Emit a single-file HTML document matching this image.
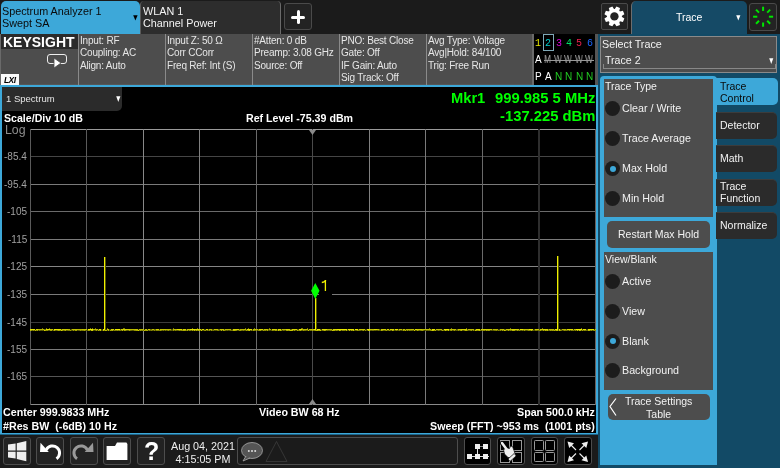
<!DOCTYPE html>
<html><head><meta charset="utf-8">
<style>
*{margin:0;padding:0;box-sizing:border-box}
html,body{width:780px;height:468px;overflow:hidden;background:#1b1b1b;font-family:"Liberation Sans",sans-serif}
.a{position:absolute}
.t{position:absolute;white-space:pre;line-height:1;will-change:transform}
.ib{position:absolute;will-change:transform;font-size:10px;letter-spacing:-0.2px;color:#e6e6e6;line-height:12.3px;white-space:pre}
.rb{position:absolute;width:15px;height:15px;border-radius:50%;background:#1c1c1c}
.rl{position:absolute;will-change:transform;font-size:10.7px;color:#f2f2f2;white-space:pre;line-height:1}
.sk{position:absolute;left:716px;width:61px;height:27px;background:#2b2b2b;border-radius:0 5px 5px 0;border-top:1px solid #3c3c3c}
.skt{position:absolute;will-change:transform;left:720px;font-size:10.5px;color:#f2f2f2;white-space:pre;line-height:11.5px}
.tb{position:absolute;top:437px;width:28px;height:28px;background:#222;border:1px solid #4d4d4d;border-radius:3px}
</style></head><body>


<div class="a" style="left:0;top:0;width:780px;height:34px;background:#1b1b1b"></div>
<div class="a" style="left:1px;top:1px;width:139px;height:33px;background:#3da8d9;border-radius:5px 5px 0 0"></div>
<div class="t" style="left:1.6px;top:5px;font-size:10.8px;color:#0a0a0a;line-height:12px">Spectrum Analyzer 1<br>Swept SA</div>
<svg class="a" style="left:133.3px;top:15px" width="5.8" height="6.6"><polygon points="0.2,0.2 4.6,0.2 2.4,5.6" fill="#000"/></svg>
<div class="a" style="left:140px;top:1px;width:141px;height:33px;background:#2d2d2d;border-right:1px solid #6a6a6a;border-left:1px solid #5a5a5a;border-radius:4px 4px 0 0"></div>
<div class="t" style="left:142.5px;top:5px;font-size:10.8px;color:#f4f4f4;line-height:12px">WLAN 1<br>Channel Power</div>
<div class="a" style="left:284px;top:3px;width:28px;height:27px;background:#232323;border:1px solid #4a4a4a;border-radius:3px"></div>
<div class="a" style="left:291px;top:15.5px;width:14px;height:3px;background:#fff;border-radius:1.5px"></div>
<div class="a" style="left:296.5px;top:10px;width:3px;height:14px;background:#fff;border-radius:1.5px"></div>

<div class="a" style="left:601px;top:3px;width:27px;height:27px;background:#232323;border:1px solid #4a4a4a;border-radius:2px"></div>
<svg class="a" style="left:601px;top:3px" width="27" height="27" viewBox="0 0 27 27">
 <g transform="translate(13.4,13.4)" fill="#fff">
 <polygon points="-2.6,-6 2.6,-6 1.9,-10 -1.9,-10" transform="rotate(22.5)"/><polygon points="-2.6,-6 2.6,-6 1.9,-10 -1.9,-10" transform="rotate(67.5)"/><polygon points="-2.6,-6 2.6,-6 1.9,-10 -1.9,-10" transform="rotate(112.5)"/><polygon points="-2.6,-6 2.6,-6 1.9,-10 -1.9,-10" transform="rotate(157.5)"/><polygon points="-2.6,-6 2.6,-6 1.9,-10 -1.9,-10" transform="rotate(202.5)"/><polygon points="-2.6,-6 2.6,-6 1.9,-10 -1.9,-10" transform="rotate(247.5)"/><polygon points="-2.6,-6 2.6,-6 1.9,-10 -1.9,-10" transform="rotate(292.5)"/><polygon points="-2.6,-6 2.6,-6 1.9,-10 -1.9,-10" transform="rotate(337.5)"/>
 <circle r="7.4"/>
 <circle r="4.2" fill="#232323"/>
 </g>
</svg>
<div class="a" style="left:631px;top:1px;width:116px;height:34px;background:#154a66;border-radius:5px 5px 0 0;border-left:1px solid #6d6d6d"></div>
<div class="t" style="left:675.5px;top:11.5px;font-size:10.5px;color:#fff">Trace</div>
<svg class="a" style="left:736px;top:15px" width="5.6" height="6.4"><polygon points="0.2,0.2 4.3999999999999995,0.2 2.3,5.4" fill="#fff"/></svg>
<div class="a" style="left:749px;top:3px;width:28px;height:28px;background:#232323;border:1px solid #4a4a4a;border-radius:3px"></div>
<svg class="a" style="left:749px;top:3px" width="28" height="28" viewBox="0 0 28 28">
 <g transform="translate(14.1,13.7)" stroke="#00e600" stroke-width="2">
 <line x1="0" y1="-5.8" x2="0" y2="-10" transform="rotate(0)"/><line x1="0" y1="-5.8" x2="0" y2="-10" transform="rotate(45)"/><line x1="0" y1="-5.8" x2="0" y2="-10" transform="rotate(90)"/><line x1="0" y1="-5.8" x2="0" y2="-10" transform="rotate(135)"/><line x1="0" y1="-5.8" x2="0" y2="-10" transform="rotate(180)"/><line x1="0" y1="-5.8" x2="0" y2="-10" transform="rotate(225)"/><line x1="0" y1="-5.8" x2="0" y2="-10" transform="rotate(270)"/><line x1="0" y1="-5.8" x2="0" y2="-10" transform="rotate(315)"/>
 </g>
</svg>


<div class="a" style="left:0;top:34px;width:598px;height:51px;background:#4d4d4d"></div><div class="a" style="left:0;top:84px;width:598px;height:1px;background:#575757"></div>
<div class="a" style="left:0;top:34px;width:1px;height:51px;background:#6a6a6a"></div>
<div class="a" style="left:1px;top:34px;width:77px;height:14.5px;background:#2b2b2b"></div>
<div class="t" style="left:3px;top:35px;font-size:14px;font-weight:bold;color:#fff">KEYSIGHT</div>
<div class="a" style="left:47px;top:54px;width:20px;height:10px;border:1.3px solid #eee;border-radius:3px"></div>
<svg class="a" style="left:52px;top:58px" width="10" height="11"><polygon points="2,0 9,5 2,10" fill="#fff" stroke="#4d4d4d" stroke-width="0.8"/></svg>
<div class="a" style="left:1px;top:74px;width:18px;height:10.5px;background:#fafafa"></div>
<div class="t" style="left:3.5px;top:75.5px;font-size:8.5px;font-weight:bold;font-style:italic;color:#000;letter-spacing:-0.6px">LXI</div>

<div class="a" style="left:78px;top:34px;width:1px;height:51px;background:#8a8a8a"></div>
<div class="a" style="left:165px;top:34px;width:1px;height:51px;background:#8a8a8a"></div>
<div class="a" style="left:252px;top:34px;width:1px;height:51px;background:#8a8a8a"></div>
<div class="a" style="left:339px;top:34px;width:1px;height:51px;background:#8a8a8a"></div>
<div class="a" style="left:426px;top:34px;width:1px;height:51px;background:#8a8a8a"></div>
<div class="ib" style="left:79.5px;top:35px">Input: RF<br>Coupling: AC<br>Align: Auto</div>
<div class="ib" style="left:166.5px;top:35px">Input Z: 50 Ω<br>Corr CCorr<br>Freq Ref: Int (S)</div>
<div class="ib" style="left:253.5px;top:35px">#Atten: 0 dB<br>Preamp: 3.08 GHz<br>Source: Off</div>
<div class="ib" style="left:340.5px;top:35px">PNO: Best Close<br>Gate: Off<br>IF Gain: Auto<br>Sig Track: Off</div>
<div class="ib" style="left:427.5px;top:35px">Avg Type: Voltage<br>Avg|Hold: 84/100<br>Trig: Free Run</div>

<div class="a" style="left:532px;top:34px;width:2px;height:51px;background:#6a6a6a"></div>
<div class="a" style="left:534px;top:34px;width:61px;height:51px;background:#000"></div>
<div class="a" style="left:543px;top:34px;width:10.5px;height:17px;border:1px solid #7fa9b8"></div>

<div class="t" style="left:535px;top:39px;font-size:10px;font-family:'Liberation Mono',monospace;color:#e6e600">1</div>
<div class="t" style="left:545.3px;top:39px;font-size:10px;font-family:'Liberation Mono',monospace;color:#00cccc">2</div>
<div class="t" style="left:555.6px;top:39px;font-size:10px;font-family:'Liberation Mono',monospace;color:#dd00dd">3</div>
<div class="t" style="left:565.9px;top:39px;font-size:10px;font-family:'Liberation Mono',monospace;color:#00dd66">4</div>
<div class="t" style="left:576.2px;top:39px;font-size:10px;font-family:'Liberation Mono',monospace;color:#e8204c">5</div>
<div class="t" style="left:586.5px;top:39px;font-size:10px;font-family:'Liberation Mono',monospace;color:#1a66ff">6</div>
<div class="t" style="left:534.5px;top:55px;font-size:10px;color:#fff;transform:scaleX(1);transform-origin:left">A</div>
<div class="t" style="left:543.8px;top:55px;font-size:10px;color:#aaa;transform:scaleX(0.82);transform-origin:left">M</div>
<div class="t" style="left:554.1px;top:55px;font-size:10px;color:#aaa;transform:scaleX(0.82);transform-origin:left">W</div>
<div class="t" style="left:564.4px;top:55px;font-size:10px;color:#aaa;transform:scaleX(0.82);transform-origin:left">W</div>
<div class="t" style="left:574.7px;top:55px;font-size:10px;color:#aaa;transform:scaleX(0.82);transform-origin:left">W</div>
<div class="t" style="left:585.0px;top:55px;font-size:10px;color:#aaa;transform:scaleX(0.82);transform-origin:left">W</div>
<div class="a" style="left:544px;top:59.5px;width:50px;height:1px;background:#999"></div>
<div class="t" style="left:534.5px;top:71.5px;font-size:10px;color:#fff">P</div>
<div class="t" style="left:544.8px;top:71.5px;font-size:10px;color:#fff">A</div>
<div class="t" style="left:555.1px;top:71.5px;font-size:10px;color:#22cc22">N</div>
<div class="t" style="left:565.4px;top:71.5px;font-size:10px;color:#22cc22">N</div>
<div class="t" style="left:575.7px;top:71.5px;font-size:10px;color:#22cc22">N</div>
<div class="t" style="left:586.0px;top:71.5px;font-size:10px;color:#22cc22">N</div>

<div class="a" style="left:0;top:85px;width:598px;height:349px;background:#3da8d9"></div><div class="a" style="left:0;top:434px;width:598px;height:1px;background:#1d6488"></div>
<div class="a" style="left:2px;top:87px;width:594px;height:346px;background:#000"></div>
<div class="a" style="left:2px;top:87px;width:120px;height:23.5px;background:#2b2b2b;border-radius:0 0 5px 0"></div>
<div class="t" style="left:5.5px;top:94px;font-size:9.5px;color:#e6e6e6">1 Spectrum</div>
<svg class="a" style="left:115.7px;top:96px" width="5.6" height="7"><polygon points="0.2,0.2 4.3999999999999995,0.2 2.3,6" fill="#fff"/></svg>
<div class="t" style="left:4px;top:113px;font-size:10.6px;font-weight:bold;color:#fff">Scale/Div 10 dB</div>
<div class="t" style="left:245.5px;top:113px;font-size:10.65px;font-weight:bold;color:#fff">Ref Level -75.39 dBm</div>
<div class="t" style="left:5px;top:124px;font-size:12.3px;color:#8e8e8e">Log</div>
<div class="t" style="left:450.5px;top:91px;font-size:14.7px;font-weight:bold;color:#00ff00">Mkr1</div>
<div class="t" style="right:185px;top:91px;font-size:14.8px;font-weight:bold;color:#00ff00">999.985 5 MHz</div>
<div class="t" style="right:185px;top:109px;font-size:14.8px;font-weight:bold;color:#00ff00">-137.225 dBm</div>

<svg class="a" style="left:0;top:0" width="600" height="440" viewBox="0 0 600 440" shape-rendering="crispEdges"><rect x="30" y="129" width="566" height="1" fill="#9a9a9a"/><rect x="30" y="156" width="566" height="1" fill="#454545"/><rect x="30" y="184" width="566" height="1" fill="#7a7a7a"/><rect x="30" y="211" width="566" height="1" fill="#6a6a6a"/><rect x="30" y="239" width="566" height="1" fill="#7a7a7a"/><rect x="30" y="266" width="566" height="1" fill="#858585"/><rect x="30" y="294" width="566" height="1" fill="#7a7a7a"/><rect x="30" y="322" width="566" height="1" fill="#3c3c3c"/><rect x="30" y="349" width="566" height="1" fill="#7a7a7a"/><rect x="30" y="376" width="566" height="1" fill="#555555"/><rect x="30" y="404" width="566" height="1" fill="#8a8a8a"/><rect x="30" y="129" width="1" height="276" fill="#5a5a5a"/><rect x="86" y="129" width="1" height="276" fill="#5a5a5a"/><rect x="143" y="129" width="1" height="276" fill="#888"/><rect x="199" y="129" width="1" height="276" fill="#808080"/><rect x="256" y="129" width="1" height="276" fill="#6a6a6a"/><rect x="312" y="129" width="1" height="276" fill="#4a4a4a"/><rect x="369" y="129" width="1" height="276" fill="#808080"/><rect x="425" y="129" width="1" height="276" fill="#7a7a7a"/><rect x="482" y="129" width="1" height="276" fill="#6a6a6a"/><rect x="538" y="129" width="1" height="276" fill="#2e2e2e"/><rect x="539" y="129" width="1" height="276" fill="#2e2e2e"/><rect x="595" y="129" width="1" height="276" fill="#6a5e5a"/></svg>
<div class="t" style="right:753px;top:152px;font-size:10px;color:#a0a0a0">-85.4</div>
<div class="t" style="right:753px;top:180px;font-size:10px;color:#a0a0a0">-95.4</div>
<div class="t" style="right:753px;top:207px;font-size:10px;color:#a0a0a0">-105</div>
<div class="t" style="right:753px;top:235px;font-size:10px;color:#a0a0a0">-115</div>
<div class="t" style="right:753px;top:262px;font-size:10px;color:#a0a0a0">-125</div>
<div class="t" style="right:753px;top:290px;font-size:10px;color:#a0a0a0">-135</div>
<div class="t" style="right:753px;top:318px;font-size:10px;color:#a0a0a0">-145</div>
<div class="t" style="right:753px;top:345px;font-size:10px;color:#a0a0a0">-155</div>
<div class="t" style="right:753px;top:372px;font-size:10px;color:#a0a0a0">-165</div>
<svg class="a" style="left:309px;top:130px" width="8" height="6"><polygon points="0,0 7,0 3.5,5" fill="#8a8a8a"/></svg>
<svg class="a" style="left:309px;top:399px" width="8" height="6"><polygon points="3.5,0 7,5 0,5" fill="#8a8a8a"/></svg>
<svg class="a" style="left:0;top:0" width="600" height="440" shape-rendering="crispEdges"><rect x="30" y="329" width="1" height="1" fill="#e7e700"/><rect x="30" y="330" width="1" height="1" fill="#bebe00"/><rect x="31" y="329" width="1" height="1" fill="#e7e700"/><rect x="31" y="330" width="1" height="1" fill="#8a8a00"/><rect x="32" y="329" width="1" height="1" fill="#e7e700"/><rect x="32" y="330" width="1" height="1" fill="#696900"/><rect x="33" y="329" width="1" height="1" fill="#e7e700"/><rect x="33" y="330" width="1" height="1" fill="#8d8d00"/><rect x="34" y="329" width="1" height="1" fill="#e7e700"/><rect x="34" y="330" width="1" height="1" fill="#686800"/><rect x="35" y="329" width="1" height="1" fill="#363600"/><rect x="35" y="330" width="1" height="1" fill="#bcbc00"/><rect x="36" y="329" width="1" height="1" fill="#d7d700"/><rect x="36" y="330" width="1" height="1" fill="#7a7a00"/><rect x="37" y="329" width="1" height="1" fill="#d7d700"/><rect x="37" y="330" width="1" height="1" fill="#a3a300"/><rect x="38" y="329" width="1" height="1" fill="#b7b700"/><rect x="38" y="330" width="1" height="1" fill="#434300"/><rect x="39" y="329" width="1" height="1" fill="#b7b700"/><rect x="39" y="330" width="1" height="1" fill="#7c7c00"/><rect x="40" y="329" width="1" height="1" fill="#b7b700"/><rect x="40" y="330" width="1" height="1" fill="#616100"/><rect x="41" y="329" width="1" height="1" fill="#b7b700"/><rect x="41" y="330" width="1" height="1" fill="#545400"/><rect x="42" y="329" width="1" height="1" fill="#b7b700"/><rect x="42" y="330" width="1" height="1" fill="#5e5e00"/><rect x="42" y="328" width="1" height="1" fill="#787800"/><rect x="43" y="329" width="1" height="1" fill="#b7b700"/><rect x="43" y="330" width="1" height="1" fill="#484800"/><rect x="44" y="329" width="1" height="1" fill="#777700"/><rect x="44" y="330" width="1" height="1" fill="#d7d700"/><rect x="45" y="329" width="1" height="1" fill="#6c6c00"/><rect x="45" y="330" width="1" height="1" fill="#adad00"/><rect x="46" y="329" width="1" height="1" fill="#e1e100"/><rect x="46" y="330" width="1" height="1" fill="#8e8e00"/><rect x="46" y="328" width="1" height="1" fill="#787800"/><rect x="47" y="329" width="1" height="1" fill="#e1e100"/><rect x="47" y="330" width="1" height="1" fill="#949400"/><rect x="48" y="329" width="1" height="1" fill="#e1e100"/><rect x="48" y="330" width="1" height="1" fill="#5c5c00"/><rect x="49" y="329" width="1" height="1" fill="#e1e100"/><rect x="49" y="330" width="1" height="1" fill="#575700"/><rect x="49" y="328" width="1" height="1" fill="#787800"/><rect x="50" y="329" width="1" height="1" fill="#c0c000"/><rect x="50" y="330" width="1" height="1" fill="#a3a300"/><rect x="51" y="329" width="1" height="1" fill="#c0c000"/><rect x="51" y="330" width="1" height="1" fill="#abab00"/><rect x="52" y="329" width="1" height="1" fill="#c0c000"/><rect x="52" y="330" width="1" height="1" fill="#4b4b00"/><rect x="53" y="329" width="1" height="1" fill="#484800"/><rect x="53" y="330" width="1" height="1" fill="#747400"/><rect x="54" y="329" width="1" height="1" fill="#eded00"/><rect x="54" y="330" width="1" height="1" fill="#b6b600"/><rect x="55" y="329" width="1" height="1" fill="#eded00"/><rect x="55" y="330" width="1" height="1" fill="#737300"/><rect x="56" y="329" width="1" height="1" fill="#e3e300"/><rect x="56" y="330" width="1" height="1" fill="#666600"/><rect x="57" y="329" width="1" height="1" fill="#e3e300"/><rect x="57" y="330" width="1" height="1" fill="#878700"/><rect x="58" y="329" width="1" height="1" fill="#e3e300"/><rect x="58" y="330" width="1" height="1" fill="#abab00"/><rect x="59" y="329" width="1" height="1" fill="#e3e300"/><rect x="59" y="330" width="1" height="1" fill="#a0a000"/><rect x="60" y="329" width="1" height="1" fill="#e3e300"/><rect x="60" y="330" width="1" height="1" fill="#848400"/><rect x="61" y="329" width="1" height="1" fill="#6e6e00"/><rect x="61" y="330" width="1" height="1" fill="#d4d400"/><rect x="62" y="329" width="1" height="1" fill="#c6c600"/><rect x="62" y="330" width="1" height="1" fill="#a5a500"/><rect x="63" y="329" width="1" height="1" fill="#c6c600"/><rect x="63" y="330" width="1" height="1" fill="#707000"/><rect x="64" y="329" width="1" height="1" fill="#c6c600"/><rect x="64" y="330" width="1" height="1" fill="#8b8b00"/><rect x="65" y="329" width="1" height="1" fill="#c6c600"/><rect x="65" y="330" width="1" height="1" fill="#b1b100"/><rect x="66" y="329" width="1" height="1" fill="#c6c600"/><rect x="66" y="330" width="1" height="1" fill="#616100"/><rect x="67" y="329" width="1" height="1" fill="#c6c600"/><rect x="67" y="330" width="1" height="1" fill="#696900"/><rect x="68" y="329" width="1" height="1" fill="#b9b900"/><rect x="68" y="330" width="1" height="1" fill="#7c7c00"/><rect x="69" y="329" width="1" height="1" fill="#b9b900"/><rect x="69" y="330" width="1" height="1" fill="#7e7e00"/><rect x="70" y="329" width="1" height="1" fill="#393900"/><rect x="70" y="330" width="1" height="1" fill="#9c9c00"/><rect x="71" y="329" width="1" height="1" fill="#6b6b00"/><rect x="71" y="330" width="1" height="1" fill="#5b5b00"/><rect x="72" y="329" width="1" height="1" fill="#bebe00"/><rect x="72" y="330" width="1" height="1" fill="#535300"/><rect x="73" y="329" width="1" height="1" fill="#bebe00"/><rect x="73" y="330" width="1" height="1" fill="#989800"/><rect x="74" y="329" width="1" height="1" fill="#bebe00"/><rect x="74" y="330" width="1" height="1" fill="#565600"/><rect x="75" y="329" width="1" height="1" fill="#bebe00"/><rect x="75" y="330" width="1" height="1" fill="#a5a500"/><rect x="76" y="329" width="1" height="1" fill="#bebe00"/><rect x="76" y="330" width="1" height="1" fill="#a6a600"/><rect x="77" y="329" width="1" height="1" fill="#b6b600"/><rect x="77" y="330" width="1" height="1" fill="#4a4a00"/><rect x="78" y="329" width="1" height="1" fill="#b6b600"/><rect x="78" y="330" width="1" height="1" fill="#595900"/><rect x="79" y="329" width="1" height="1" fill="#b6b600"/><rect x="79" y="330" width="1" height="1" fill="#676700"/><rect x="80" y="329" width="1" height="1" fill="#b6b600"/><rect x="80" y="330" width="1" height="1" fill="#9a9a00"/><rect x="81" y="329" width="1" height="1" fill="#b6b600"/><rect x="81" y="330" width="1" height="1" fill="#747400"/><rect x="82" y="329" width="1" height="1" fill="#c1c100"/><rect x="82" y="330" width="1" height="1" fill="#7f7f00"/><rect x="83" y="329" width="1" height="1" fill="#c1c100"/><rect x="83" y="330" width="1" height="1" fill="#858500"/><rect x="84" y="329" width="1" height="1" fill="#c1c100"/><rect x="84" y="330" width="1" height="1" fill="#a5a500"/><rect x="85" y="329" width="1" height="1" fill="#c4c400"/><rect x="85" y="330" width="1" height="1" fill="#747400"/><rect x="86" y="329" width="1" height="1" fill="#c4c400"/><rect x="86" y="330" width="1" height="1" fill="#575700"/><rect x="87" y="329" width="1" height="1" fill="#363600"/><rect x="87" y="330" width="1" height="1" fill="#5b5b00"/><rect x="88" y="329" width="1" height="1" fill="#eeee00"/><rect x="88" y="330" width="1" height="1" fill="#a9a900"/><rect x="89" y="329" width="1" height="1" fill="#eeee00"/><rect x="89" y="330" width="1" height="1" fill="#a0a000"/><rect x="90" y="329" width="1" height="1" fill="#eeee00"/><rect x="90" y="330" width="1" height="1" fill="#585800"/><rect x="90" y="328" width="1" height="1" fill="#787800"/><rect x="91" y="329" width="1" height="1" fill="#eeee00"/><rect x="91" y="330" width="1" height="1" fill="#cbcb00"/><rect x="92" y="329" width="1" height="1" fill="#eeee00"/><rect x="92" y="330" width="1" height="1" fill="#d2d200"/><rect x="92" y="328" width="1" height="1" fill="#787800"/><rect x="93" y="329" width="1" height="1" fill="#b8b800"/><rect x="93" y="330" width="1" height="1" fill="#5f5f00"/><rect x="94" y="329" width="1" height="1" fill="#b8b800"/><rect x="94" y="330" width="1" height="1" fill="#474700"/><rect x="95" y="329" width="1" height="1" fill="#b8b800"/><rect x="95" y="330" width="1" height="1" fill="#656500"/><rect x="95" y="328" width="1" height="1" fill="#787800"/><rect x="96" y="329" width="1" height="1" fill="#b8b800"/><rect x="96" y="330" width="1" height="1" fill="#9f9f00"/><rect x="97" y="329" width="1" height="1" fill="#b8b800"/><rect x="97" y="330" width="1" height="1" fill="#4d4d00"/><rect x="98" y="329" width="1" height="1" fill="#494900"/><rect x="98" y="330" width="1" height="1" fill="#aaaa00"/><rect x="99" y="329" width="1" height="1" fill="#e8e800"/><rect x="99" y="330" width="1" height="1" fill="#868600"/><rect x="100" y="329" width="1" height="1" fill="#e8e800"/><rect x="100" y="330" width="1" height="1" fill="#bfbf00"/><rect x="101" y="329" width="1" height="1" fill="#4b4b00"/><rect x="101" y="330" width="1" height="1" fill="#494900"/><rect x="102" y="329" width="1" height="1" fill="#353500"/><rect x="102" y="330" width="1" height="1" fill="#555500"/><rect x="103" y="329" width="1" height="1" fill="#efef00"/><rect x="103" y="330" width="1" height="1" fill="#c7c700"/><rect x="104" y="329" width="1" height="1" fill="#efef00"/><rect x="104" y="330" width="1" height="1" fill="#878700"/><rect x="105" y="329" width="1" height="1" fill="#4f4f00"/><rect x="105" y="330" width="1" height="1" fill="#c0c000"/><rect x="106" y="329" width="1" height="1" fill="#363600"/><rect x="106" y="330" width="1" height="1" fill="#b4b400"/><rect x="107" y="329" width="1" height="1" fill="#c6c600"/><rect x="107" y="330" width="1" height="1" fill="#4f4f00"/><rect x="107" y="328" width="1" height="1" fill="#787800"/><rect x="108" y="329" width="1" height="1" fill="#c6c600"/><rect x="108" y="330" width="1" height="1" fill="#aeae00"/><rect x="109" y="329" width="1" height="1" fill="#424200"/><rect x="109" y="330" width="1" height="1" fill="#494900"/><rect x="110" y="329" width="1" height="1" fill="#454500"/><rect x="110" y="330" width="1" height="1" fill="#a9a900"/><rect x="111" y="329" width="1" height="1" fill="#d3d300"/><rect x="111" y="330" width="1" height="1" fill="#a1a100"/><rect x="112" y="329" width="1" height="1" fill="#d3d300"/><rect x="112" y="330" width="1" height="1" fill="#b5b500"/><rect x="113" y="329" width="1" height="1" fill="#d3d300"/><rect x="113" y="330" width="1" height="1" fill="#656500"/><rect x="114" y="329" width="1" height="1" fill="#3e3e00"/><rect x="114" y="330" width="1" height="1" fill="#868600"/><rect x="115" y="329" width="1" height="1" fill="#e8e800"/><rect x="115" y="330" width="1" height="1" fill="#828200"/><rect x="116" y="329" width="1" height="1" fill="#e8e800"/><rect x="116" y="330" width="1" height="1" fill="#7a7a00"/><rect x="117" y="329" width="1" height="1" fill="#e8e800"/><rect x="117" y="330" width="1" height="1" fill="#919100"/><rect x="118" y="329" width="1" height="1" fill="#eded00"/><rect x="118" y="330" width="1" height="1" fill="#777700"/><rect x="119" y="329" width="1" height="1" fill="#eded00"/><rect x="119" y="330" width="1" height="1" fill="#8d8d00"/><rect x="120" y="329" width="1" height="1" fill="#6b6b00"/><rect x="120" y="330" width="1" height="1" fill="#7f7f00"/><rect x="121" y="329" width="1" height="1" fill="#d1d100"/><rect x="121" y="330" width="1" height="1" fill="#6d6d00"/><rect x="122" y="329" width="1" height="1" fill="#d1d100"/><rect x="122" y="330" width="1" height="1" fill="#baba00"/><rect x="123" y="329" width="1" height="1" fill="#d1d100"/><rect x="123" y="330" width="1" height="1" fill="#515100"/><rect x="123" y="328" width="1" height="1" fill="#787800"/><rect x="124" y="329" width="1" height="1" fill="#d1d100"/><rect x="124" y="330" width="1" height="1" fill="#aeae00"/><rect x="124" y="328" width="1" height="1" fill="#787800"/><rect x="125" y="329" width="1" height="1" fill="#d1d100"/><rect x="125" y="330" width="1" height="1" fill="#9b9b00"/><rect x="126" y="329" width="1" height="1" fill="#d1d100"/><rect x="126" y="330" width="1" height="1" fill="#6d6d00"/><rect x="127" y="329" width="1" height="1" fill="#cccc00"/><rect x="127" y="330" width="1" height="1" fill="#5c5c00"/><rect x="128" y="329" width="1" height="1" fill="#cccc00"/><rect x="128" y="330" width="1" height="1" fill="#656500"/><rect x="129" y="329" width="1" height="1" fill="#cccc00"/><rect x="129" y="330" width="1" height="1" fill="#a1a100"/><rect x="130" y="329" width="1" height="1" fill="#baba00"/><rect x="130" y="330" width="1" height="1" fill="#787800"/><rect x="131" y="329" width="1" height="1" fill="#baba00"/><rect x="131" y="330" width="1" height="1" fill="#676700"/><rect x="132" y="329" width="1" height="1" fill="#baba00"/><rect x="132" y="330" width="1" height="1" fill="#555500"/><rect x="133" y="329" width="1" height="1" fill="#baba00"/><rect x="133" y="330" width="1" height="1" fill="#5b5b00"/><rect x="134" y="329" width="1" height="1" fill="#baba00"/><rect x="134" y="330" width="1" height="1" fill="#8e8e00"/><rect x="135" y="329" width="1" height="1" fill="#c1c100"/><rect x="135" y="330" width="1" height="1" fill="#969600"/><rect x="136" y="329" width="1" height="1" fill="#c1c100"/><rect x="136" y="330" width="1" height="1" fill="#a8a800"/><rect x="137" y="329" width="1" height="1" fill="#c1c100"/><rect x="137" y="330" width="1" height="1" fill="#adad00"/><rect x="138" y="329" width="1" height="1" fill="#363600"/><rect x="138" y="330" width="1" height="1" fill="#cece00"/><rect x="139" y="329" width="1" height="1" fill="#bbbb00"/><rect x="139" y="330" width="1" height="1" fill="#707000"/><rect x="140" y="329" width="1" height="1" fill="#bbbb00"/><rect x="140" y="330" width="1" height="1" fill="#9f9f00"/><rect x="141" y="329" width="1" height="1" fill="#bbbb00"/><rect x="141" y="330" width="1" height="1" fill="#7c7c00"/><rect x="142" y="329" width="1" height="1" fill="#bbbb00"/><rect x="142" y="330" width="1" height="1" fill="#949400"/><rect x="143" y="329" width="1" height="1" fill="#bbbb00"/><rect x="143" y="330" width="1" height="1" fill="#717100"/><rect x="144" y="329" width="1" height="1" fill="#373700"/><rect x="144" y="330" width="1" height="1" fill="#c4c400"/><rect x="145" y="329" width="1" height="1" fill="#c0c000"/><rect x="145" y="330" width="1" height="1" fill="#a2a200"/><rect x="146" y="329" width="1" height="1" fill="#c0c000"/><rect x="146" y="330" width="1" height="1" fill="#abab00"/><rect x="147" y="329" width="1" height="1" fill="#424200"/><rect x="147" y="330" width="1" height="1" fill="#afaf00"/><rect x="148" y="329" width="1" height="1" fill="#c8c800"/><rect x="148" y="330" width="1" height="1" fill="#4f4f00"/><rect x="149" y="329" width="1" height="1" fill="#c8c800"/><rect x="149" y="330" width="1" height="1" fill="#838300"/><rect x="150" y="329" width="1" height="1" fill="#727200"/><rect x="150" y="330" width="1" height="1" fill="#676700"/><rect x="151" y="329" width="1" height="1" fill="#6e6e00"/><rect x="151" y="330" width="1" height="1" fill="#858500"/><rect x="152" y="329" width="1" height="1" fill="#bebe00"/><rect x="152" y="330" width="1" height="1" fill="#656500"/><rect x="153" y="329" width="1" height="1" fill="#bebe00"/><rect x="153" y="330" width="1" height="1" fill="#515100"/><rect x="154" y="329" width="1" height="1" fill="#747400"/><rect x="154" y="330" width="1" height="1" fill="#8e8e00"/><rect x="155" y="329" width="1" height="1" fill="#747400"/><rect x="155" y="330" width="1" height="1" fill="#545400"/><rect x="156" y="329" width="1" height="1" fill="#cece00"/><rect x="156" y="330" width="1" height="1" fill="#878700"/><rect x="157" y="329" width="1" height="1" fill="#cece00"/><rect x="157" y="330" width="1" height="1" fill="#878700"/><rect x="158" y="329" width="1" height="1" fill="#cece00"/><rect x="158" y="330" width="1" height="1" fill="#828200"/><rect x="159" y="329" width="1" height="1" fill="#464600"/><rect x="159" y="330" width="1" height="1" fill="#7e7e00"/><rect x="160" y="329" width="1" height="1" fill="#c0c000"/><rect x="160" y="330" width="1" height="1" fill="#9d9d00"/><rect x="161" y="329" width="1" height="1" fill="#c0c000"/><rect x="161" y="330" width="1" height="1" fill="#7a7a00"/><rect x="162" y="329" width="1" height="1" fill="#c0c000"/><rect x="162" y="330" width="1" height="1" fill="#585800"/><rect x="163" y="329" width="1" height="1" fill="#c0c000"/><rect x="163" y="330" width="1" height="1" fill="#787800"/><rect x="164" y="329" width="1" height="1" fill="#c0c000"/><rect x="164" y="330" width="1" height="1" fill="#464600"/><rect x="165" y="329" width="1" height="1" fill="#c0c000"/><rect x="165" y="330" width="1" height="1" fill="#7a7a00"/><rect x="166" y="329" width="1" height="1" fill="#b9b900"/><rect x="166" y="330" width="1" height="1" fill="#515100"/><rect x="167" y="329" width="1" height="1" fill="#b9b900"/><rect x="167" y="330" width="1" height="1" fill="#6f6f00"/><rect x="168" y="329" width="1" height="1" fill="#b9b900"/><rect x="168" y="330" width="1" height="1" fill="#929200"/><rect x="169" y="329" width="1" height="1" fill="#b9b900"/><rect x="169" y="330" width="1" height="1" fill="#5a5a00"/><rect x="170" y="329" width="1" height="1" fill="#b9b900"/><rect x="170" y="330" width="1" height="1" fill="#636300"/><rect x="171" y="329" width="1" height="1" fill="#555500"/><rect x="171" y="330" width="1" height="1" fill="#575700"/><rect x="172" y="329" width="1" height="1" fill="#4e4e00"/><rect x="172" y="330" width="1" height="1" fill="#4c4c00"/><rect x="173" y="329" width="1" height="1" fill="#bbbb00"/><rect x="173" y="330" width="1" height="1" fill="#929200"/><rect x="173" y="328" width="1" height="1" fill="#787800"/><rect x="174" y="329" width="1" height="1" fill="#bbbb00"/><rect x="174" y="330" width="1" height="1" fill="#555500"/><rect x="175" y="329" width="1" height="1" fill="#bbbb00"/><rect x="175" y="330" width="1" height="1" fill="#888800"/><rect x="176" y="329" width="1" height="1" fill="#bbbb00"/><rect x="176" y="330" width="1" height="1" fill="#666600"/><rect x="177" y="329" width="1" height="1" fill="#dfdf00"/><rect x="177" y="330" width="1" height="1" fill="#5d5d00"/><rect x="178" y="329" width="1" height="1" fill="#dfdf00"/><rect x="178" y="330" width="1" height="1" fill="#6d6d00"/><rect x="179" y="329" width="1" height="1" fill="#dfdf00"/><rect x="179" y="330" width="1" height="1" fill="#8f8f00"/><rect x="180" y="329" width="1" height="1" fill="#dfdf00"/><rect x="180" y="330" width="1" height="1" fill="#7c7c00"/><rect x="181" y="329" width="1" height="1" fill="#dfdf00"/><rect x="181" y="330" width="1" height="1" fill="#8f8f00"/><rect x="182" y="329" width="1" height="1" fill="#6e6e00"/><rect x="182" y="330" width="1" height="1" fill="#949400"/><rect x="183" y="329" width="1" height="1" fill="#d3d300"/><rect x="183" y="330" width="1" height="1" fill="#adad00"/><rect x="184" y="329" width="1" height="1" fill="#d3d300"/><rect x="184" y="330" width="1" height="1" fill="#adad00"/><rect x="185" y="329" width="1" height="1" fill="#d3d300"/><rect x="185" y="330" width="1" height="1" fill="#a0a000"/><rect x="186" y="329" width="1" height="1" fill="#464600"/><rect x="186" y="330" width="1" height="1" fill="#757500"/><rect x="187" y="329" width="1" height="1" fill="#c1c100"/><rect x="187" y="330" width="1" height="1" fill="#adad00"/><rect x="188" y="329" width="1" height="1" fill="#c1c100"/><rect x="188" y="330" width="1" height="1" fill="#515100"/><rect x="189" y="329" width="1" height="1" fill="#c1c100"/><rect x="189" y="330" width="1" height="1" fill="#909000"/><rect x="190" y="329" width="1" height="1" fill="#e5e500"/><rect x="190" y="330" width="1" height="1" fill="#858500"/><rect x="191" y="329" width="1" height="1" fill="#e5e500"/><rect x="191" y="330" width="1" height="1" fill="#606000"/><rect x="192" y="329" width="1" height="1" fill="#e5e500"/><rect x="192" y="330" width="1" height="1" fill="#a7a700"/><rect x="192" y="328" width="1" height="1" fill="#787800"/><rect x="193" y="329" width="1" height="1" fill="#e5e500"/><rect x="193" y="330" width="1" height="1" fill="#696900"/><rect x="194" y="329" width="1" height="1" fill="#e5e500"/><rect x="194" y="330" width="1" height="1" fill="#c3c300"/><rect x="195" y="329" width="1" height="1" fill="#dada00"/><rect x="195" y="330" width="1" height="1" fill="#757500"/><rect x="196" y="329" width="1" height="1" fill="#dada00"/><rect x="196" y="330" width="1" height="1" fill="#b0b000"/><rect x="197" y="329" width="1" height="1" fill="#dada00"/><rect x="197" y="330" width="1" height="1" fill="#868600"/><rect x="197" y="328" width="1" height="1" fill="#787800"/><rect x="198" y="329" width="1" height="1" fill="#dada00"/><rect x="198" y="330" width="1" height="1" fill="#a7a700"/><rect x="199" y="329" width="1" height="1" fill="#dada00"/><rect x="199" y="330" width="1" height="1" fill="#b8b800"/><rect x="200" y="329" width="1" height="1" fill="#dada00"/><rect x="200" y="330" width="1" height="1" fill="#636300"/><rect x="201" y="329" width="1" height="1" fill="#6c6c00"/><rect x="201" y="330" width="1" height="1" fill="#d6d600"/><rect x="202" y="329" width="1" height="1" fill="#d6d600"/><rect x="202" y="330" width="1" height="1" fill="#5b5b00"/><rect x="203" y="329" width="1" height="1" fill="#d6d600"/><rect x="203" y="330" width="1" height="1" fill="#545400"/><rect x="204" y="329" width="1" height="1" fill="#515100"/><rect x="204" y="330" width="1" height="1" fill="#929200"/><rect x="205" y="329" width="1" height="1" fill="#4e4e00"/><rect x="205" y="330" width="1" height="1" fill="#9e9e00"/><rect x="206" y="329" width="1" height="1" fill="#dada00"/><rect x="206" y="330" width="1" height="1" fill="#515100"/><rect x="207" y="329" width="1" height="1" fill="#dada00"/><rect x="207" y="330" width="1" height="1" fill="#7d7d00"/><rect x="208" y="329" width="1" height="1" fill="#4d4d00"/><rect x="208" y="330" width="1" height="1" fill="#646400"/><rect x="209" y="329" width="1" height="1" fill="#b9b900"/><rect x="209" y="330" width="1" height="1" fill="#919100"/><rect x="210" y="329" width="1" height="1" fill="#b9b900"/><rect x="210" y="330" width="1" height="1" fill="#494900"/><rect x="211" y="329" width="1" height="1" fill="#b9b900"/><rect x="211" y="330" width="1" height="1" fill="#9a9a00"/><rect x="212" y="329" width="1" height="1" fill="#595900"/><rect x="212" y="330" width="1" height="1" fill="#636300"/><rect x="213" y="329" width="1" height="1" fill="#5a5a00"/><rect x="213" y="330" width="1" height="1" fill="#797900"/><rect x="214" y="329" width="1" height="1" fill="#c4c400"/><rect x="214" y="330" width="1" height="1" fill="#515100"/><rect x="215" y="329" width="1" height="1" fill="#c4c400"/><rect x="215" y="330" width="1" height="1" fill="#565600"/><rect x="216" y="329" width="1" height="1" fill="#c4c400"/><rect x="216" y="330" width="1" height="1" fill="#535300"/><rect x="217" y="329" width="1" height="1" fill="#c4c400"/><rect x="217" y="330" width="1" height="1" fill="#7f7f00"/><rect x="218" y="329" width="1" height="1" fill="#676700"/><rect x="218" y="330" width="1" height="1" fill="#828200"/><rect x="219" y="329" width="1" height="1" fill="#646400"/><rect x="219" y="330" width="1" height="1" fill="#525200"/><rect x="220" y="329" width="1" height="1" fill="#c6c600"/><rect x="220" y="330" width="1" height="1" fill="#505000"/><rect x="221" y="329" width="1" height="1" fill="#c6c600"/><rect x="221" y="330" width="1" height="1" fill="#b1b100"/><rect x="222" y="329" width="1" height="1" fill="#c6c600"/><rect x="222" y="330" width="1" height="1" fill="#4a4a00"/><rect x="223" y="329" width="1" height="1" fill="#c6c600"/><rect x="223" y="330" width="1" height="1" fill="#aeae00"/><rect x="224" y="329" width="1" height="1" fill="#5f5f00"/><rect x="224" y="330" width="1" height="1" fill="#9a9a00"/><rect x="225" y="329" width="1" height="1" fill="#b8b800"/><rect x="225" y="330" width="1" height="1" fill="#747400"/><rect x="226" y="329" width="1" height="1" fill="#b8b800"/><rect x="226" y="330" width="1" height="1" fill="#565600"/><rect x="227" y="329" width="1" height="1" fill="#b8b800"/><rect x="227" y="330" width="1" height="1" fill="#686800"/><rect x="228" y="329" width="1" height="1" fill="#b8b800"/><rect x="228" y="330" width="1" height="1" fill="#4c4c00"/><rect x="229" y="329" width="1" height="1" fill="#b8b800"/><rect x="229" y="330" width="1" height="1" fill="#585800"/><rect x="230" y="329" width="1" height="1" fill="#b8b800"/><rect x="230" y="330" width="1" height="1" fill="#737300"/><rect x="231" y="329" width="1" height="1" fill="#303000"/><rect x="231" y="330" width="1" height="1" fill="#6d6d00"/><rect x="232" y="329" width="1" height="1" fill="#434300"/><rect x="232" y="330" width="1" height="1" fill="#797900"/><rect x="233" y="329" width="1" height="1" fill="#d2d200"/><rect x="233" y="330" width="1" height="1" fill="#b9b900"/><rect x="234" y="329" width="1" height="1" fill="#d2d200"/><rect x="234" y="330" width="1" height="1" fill="#bcbc00"/><rect x="235" y="329" width="1" height="1" fill="#d2d200"/><rect x="235" y="330" width="1" height="1" fill="#a7a700"/><rect x="236" y="329" width="1" height="1" fill="#d2d200"/><rect x="236" y="330" width="1" height="1" fill="#8e8e00"/><rect x="237" y="329" width="1" height="1" fill="#d2d200"/><rect x="237" y="330" width="1" height="1" fill="#4e4e00"/><rect x="238" y="329" width="1" height="1" fill="#d2d200"/><rect x="238" y="330" width="1" height="1" fill="#5c5c00"/><rect x="239" y="329" width="1" height="1" fill="#6d6d00"/><rect x="239" y="330" width="1" height="1" fill="#969600"/><rect x="240" y="329" width="1" height="1" fill="#b7b700"/><rect x="240" y="330" width="1" height="1" fill="#9f9f00"/><rect x="241" y="329" width="1" height="1" fill="#b7b700"/><rect x="241" y="330" width="1" height="1" fill="#757500"/><rect x="242" y="329" width="1" height="1" fill="#b7b700"/><rect x="242" y="330" width="1" height="1" fill="#656500"/><rect x="243" y="329" width="1" height="1" fill="#b7b700"/><rect x="243" y="330" width="1" height="1" fill="#828200"/><rect x="244" y="329" width="1" height="1" fill="#b7b700"/><rect x="244" y="330" width="1" height="1" fill="#5c5c00"/><rect x="245" y="329" width="1" height="1" fill="#b7b700"/><rect x="245" y="330" width="1" height="1" fill="#5e5e00"/><rect x="245" y="328" width="1" height="1" fill="#787800"/><rect x="246" y="329" width="1" height="1" fill="#5a5a00"/><rect x="246" y="330" width="1" height="1" fill="#a3a300"/><rect x="247" y="329" width="1" height="1" fill="#e1e100"/><rect x="247" y="330" width="1" height="1" fill="#7f7f00"/><rect x="248" y="329" width="1" height="1" fill="#e1e100"/><rect x="248" y="330" width="1" height="1" fill="#abab00"/><rect x="248" y="328" width="1" height="1" fill="#787800"/><rect x="249" y="329" width="1" height="1" fill="#e1e100"/><rect x="249" y="330" width="1" height="1" fill="#c9c900"/><rect x="250" y="329" width="1" height="1" fill="#e1e100"/><rect x="250" y="330" width="1" height="1" fill="#575700"/><rect x="251" y="329" width="1" height="1" fill="#e1e100"/><rect x="251" y="330" width="1" height="1" fill="#848400"/><rect x="252" y="329" width="1" height="1" fill="#333300"/><rect x="252" y="330" width="1" height="1" fill="#565600"/><rect x="253" y="329" width="1" height="1" fill="#bcbc00"/><rect x="253" y="330" width="1" height="1" fill="#a5a500"/><rect x="254" y="329" width="1" height="1" fill="#bcbc00"/><rect x="254" y="330" width="1" height="1" fill="#8b8b00"/><rect x="254" y="328" width="1" height="1" fill="#787800"/><rect x="255" y="329" width="1" height="1" fill="#bcbc00"/><rect x="255" y="330" width="1" height="1" fill="#6d6d00"/><rect x="256" y="329" width="1" height="1" fill="#bcbc00"/><rect x="256" y="330" width="1" height="1" fill="#9b9b00"/><rect x="257" y="329" width="1" height="1" fill="#bcbc00"/><rect x="257" y="330" width="1" height="1" fill="#525200"/><rect x="258" y="329" width="1" height="1" fill="#606000"/><rect x="258" y="330" width="1" height="1" fill="#898900"/><rect x="259" y="329" width="1" height="1" fill="#dada00"/><rect x="259" y="330" width="1" height="1" fill="#9e9e00"/><rect x="260" y="329" width="1" height="1" fill="#dada00"/><rect x="260" y="330" width="1" height="1" fill="#a5a500"/><rect x="261" y="329" width="1" height="1" fill="#dada00"/><rect x="261" y="330" width="1" height="1" fill="#5c5c00"/><rect x="262" y="329" width="1" height="1" fill="#dada00"/><rect x="262" y="330" width="1" height="1" fill="#5b5b00"/><rect x="263" y="329" width="1" height="1" fill="#686800"/><rect x="263" y="330" width="1" height="1" fill="#a1a100"/><rect x="264" y="329" width="1" height="1" fill="#c4c400"/><rect x="264" y="330" width="1" height="1" fill="#868600"/><rect x="265" y="329" width="1" height="1" fill="#c4c400"/><rect x="265" y="330" width="1" height="1" fill="#909000"/><rect x="266" y="329" width="1" height="1" fill="#c4c400"/><rect x="266" y="330" width="1" height="1" fill="#626200"/><rect x="267" y="329" width="1" height="1" fill="#c4c400"/><rect x="267" y="330" width="1" height="1" fill="#abab00"/><rect x="268" y="329" width="1" height="1" fill="#6f6f00"/><rect x="268" y="330" width="1" height="1" fill="#4d4d00"/><rect x="269" y="329" width="1" height="1" fill="#b4b400"/><rect x="269" y="330" width="1" height="1" fill="#585800"/><rect x="269" y="328" width="1" height="1" fill="#787800"/><rect x="270" y="329" width="1" height="1" fill="#b4b400"/><rect x="270" y="330" width="1" height="1" fill="#424200"/><rect x="271" y="329" width="1" height="1" fill="#353500"/><rect x="271" y="330" width="1" height="1" fill="#545400"/><rect x="272" y="329" width="1" height="1" fill="#d5d500"/><rect x="272" y="330" width="1" height="1" fill="#949400"/><rect x="273" y="329" width="1" height="1" fill="#d5d500"/><rect x="273" y="330" width="1" height="1" fill="#828200"/><rect x="274" y="329" width="1" height="1" fill="#d5d500"/><rect x="274" y="330" width="1" height="1" fill="#727200"/><rect x="275" y="329" width="1" height="1" fill="#cece00"/><rect x="275" y="330" width="1" height="1" fill="#a5a500"/><rect x="276" y="329" width="1" height="1" fill="#cece00"/><rect x="276" y="330" width="1" height="1" fill="#9f9f00"/><rect x="277" y="329" width="1" height="1" fill="#4c4c00"/><rect x="277" y="330" width="1" height="1" fill="#5d5d00"/><rect x="278" y="329" width="1" height="1" fill="#dbdb00"/><rect x="278" y="330" width="1" height="1" fill="#c3c300"/><rect x="279" y="329" width="1" height="1" fill="#dbdb00"/><rect x="279" y="330" width="1" height="1" fill="#8e8e00"/><rect x="280" y="329" width="1" height="1" fill="#dbdb00"/><rect x="280" y="330" width="1" height="1" fill="#bbbb00"/><rect x="281" y="329" width="1" height="1" fill="#595900"/><rect x="281" y="330" width="1" height="1" fill="#8a8a00"/><rect x="282" y="329" width="1" height="1" fill="#b8b800"/><rect x="282" y="330" width="1" height="1" fill="#494900"/><rect x="283" y="329" width="1" height="1" fill="#b8b800"/><rect x="283" y="330" width="1" height="1" fill="#717100"/><rect x="284" y="329" width="1" height="1" fill="#b8b800"/><rect x="284" y="330" width="1" height="1" fill="#5f5f00"/><rect x="285" y="329" width="1" height="1" fill="#b8b800"/><rect x="285" y="330" width="1" height="1" fill="#484800"/><rect x="286" y="329" width="1" height="1" fill="#d1d100"/><rect x="286" y="330" width="1" height="1" fill="#a1a100"/><rect x="287" y="329" width="1" height="1" fill="#d1d100"/><rect x="287" y="330" width="1" height="1" fill="#afaf00"/><rect x="288" y="329" width="1" height="1" fill="#d1d100"/><rect x="288" y="330" width="1" height="1" fill="#959500"/><rect x="289" y="329" width="1" height="1" fill="#d1d100"/><rect x="289" y="330" width="1" height="1" fill="#b1b100"/><rect x="290" y="329" width="1" height="1" fill="#585800"/><rect x="290" y="330" width="1" height="1" fill="#cccc00"/><rect x="291" y="329" width="1" height="1" fill="#737300"/><rect x="291" y="330" width="1" height="1" fill="#cbcb00"/><rect x="292" y="329" width="1" height="1" fill="#d3d300"/><rect x="292" y="330" width="1" height="1" fill="#bdbd00"/><rect x="293" y="329" width="1" height="1" fill="#d3d300"/><rect x="293" y="330" width="1" height="1" fill="#636300"/><rect x="294" y="329" width="1" height="1" fill="#d3d300"/><rect x="294" y="330" width="1" height="1" fill="#9f9f00"/><rect x="295" y="329" width="1" height="1" fill="#d3d300"/><rect x="295" y="330" width="1" height="1" fill="#535300"/><rect x="296" y="329" width="1" height="1" fill="#d3d300"/><rect x="296" y="330" width="1" height="1" fill="#4c4c00"/><rect x="297" y="329" width="1" height="1" fill="#696900"/><rect x="297" y="330" width="1" height="1" fill="#b2b200"/><rect x="298" y="329" width="1" height="1" fill="#4a4a00"/><rect x="298" y="330" width="1" height="1" fill="#808000"/><rect x="299" y="329" width="1" height="1" fill="#e6e600"/><rect x="299" y="330" width="1" height="1" fill="#979700"/><rect x="300" y="329" width="1" height="1" fill="#e6e600"/><rect x="300" y="330" width="1" height="1" fill="#b0b000"/><rect x="301" y="329" width="1" height="1" fill="#e6e600"/><rect x="301" y="330" width="1" height="1" fill="#747400"/><rect x="301" y="328" width="1" height="1" fill="#787800"/><rect x="302" y="329" width="1" height="1" fill="#bdbd00"/><rect x="302" y="330" width="1" height="1" fill="#616100"/><rect x="302" y="328" width="1" height="1" fill="#787800"/><rect x="303" y="329" width="1" height="1" fill="#bdbd00"/><rect x="303" y="330" width="1" height="1" fill="#9a9a00"/><rect x="304" y="329" width="1" height="1" fill="#bdbd00"/><rect x="304" y="330" width="1" height="1" fill="#7e7e00"/><rect x="305" y="329" width="1" height="1" fill="#bdbd00"/><rect x="305" y="330" width="1" height="1" fill="#7b7b00"/><rect x="306" y="329" width="1" height="1" fill="#bdbd00"/><rect x="306" y="330" width="1" height="1" fill="#5e5e00"/><rect x="307" y="329" width="1" height="1" fill="#bdbd00"/><rect x="307" y="330" width="1" height="1" fill="#636300"/><rect x="307" y="328" width="1" height="1" fill="#787800"/><rect x="308" y="329" width="1" height="1" fill="#373700"/><rect x="308" y="330" width="1" height="1" fill="#bdbd00"/><rect x="309" y="329" width="1" height="1" fill="#c2c200"/><rect x="309" y="330" width="1" height="1" fill="#5b5b00"/><rect x="310" y="329" width="1" height="1" fill="#c2c200"/><rect x="310" y="330" width="1" height="1" fill="#7c7c00"/><rect x="311" y="329" width="1" height="1" fill="#c2c200"/><rect x="311" y="330" width="1" height="1" fill="#6e6e00"/><rect x="312" y="329" width="1" height="1" fill="#c2c200"/><rect x="312" y="330" width="1" height="1" fill="#abab00"/><rect x="313" y="329" width="1" height="1" fill="#c2c200"/><rect x="313" y="330" width="1" height="1" fill="#797900"/><rect x="314" y="329" width="1" height="1" fill="#eaea00"/><rect x="314" y="330" width="1" height="1" fill="#878700"/><rect x="315" y="329" width="1" height="1" fill="#eaea00"/><rect x="315" y="330" width="1" height="1" fill="#a8a800"/><rect x="316" y="329" width="1" height="1" fill="#eaea00"/><rect x="316" y="330" width="1" height="1" fill="#baba00"/><rect x="317" y="329" width="1" height="1" fill="#eaea00"/><rect x="317" y="330" width="1" height="1" fill="#c5c500"/><rect x="318" y="329" width="1" height="1" fill="#eaea00"/><rect x="318" y="330" width="1" height="1" fill="#a4a400"/><rect x="319" y="329" width="1" height="1" fill="#eaea00"/><rect x="319" y="330" width="1" height="1" fill="#adad00"/><rect x="320" y="329" width="1" height="1" fill="#727200"/><rect x="320" y="330" width="1" height="1" fill="#cbcb00"/><rect x="321" y="329" width="1" height="1" fill="#414100"/><rect x="321" y="330" width="1" height="1" fill="#5f5f00"/><rect x="322" y="329" width="1" height="1" fill="#dddd00"/><rect x="322" y="330" width="1" height="1" fill="#747400"/><rect x="323" y="329" width="1" height="1" fill="#dddd00"/><rect x="323" y="330" width="1" height="1" fill="#8d8d00"/><rect x="324" y="329" width="1" height="1" fill="#dddd00"/><rect x="324" y="330" width="1" height="1" fill="#b9b900"/><rect x="325" y="329" width="1" height="1" fill="#dddd00"/><rect x="325" y="330" width="1" height="1" fill="#a6a600"/><rect x="326" y="329" width="1" height="1" fill="#dddd00"/><rect x="326" y="330" width="1" height="1" fill="#606000"/><rect x="327" y="329" width="1" height="1" fill="#b5b500"/><rect x="327" y="330" width="1" height="1" fill="#6f6f00"/><rect x="328" y="329" width="1" height="1" fill="#b5b500"/><rect x="328" y="330" width="1" height="1" fill="#5e5e00"/><rect x="329" y="329" width="1" height="1" fill="#b5b500"/><rect x="329" y="330" width="1" height="1" fill="#636300"/><rect x="330" y="329" width="1" height="1" fill="#b5b500"/><rect x="330" y="330" width="1" height="1" fill="#7b7b00"/><rect x="331" y="329" width="1" height="1" fill="#b5b500"/><rect x="331" y="330" width="1" height="1" fill="#727200"/><rect x="332" y="329" width="1" height="1" fill="#4c4c00"/><rect x="332" y="330" width="1" height="1" fill="#cbcb00"/><rect x="333" y="329" width="1" height="1" fill="#d9d900"/><rect x="333" y="330" width="1" height="1" fill="#bcbc00"/><rect x="334" y="329" width="1" height="1" fill="#d9d900"/><rect x="334" y="330" width="1" height="1" fill="#b2b200"/><rect x="335" y="329" width="1" height="1" fill="#d9d900"/><rect x="335" y="330" width="1" height="1" fill="#7c7c00"/><rect x="336" y="329" width="1" height="1" fill="#d9d900"/><rect x="336" y="330" width="1" height="1" fill="#9b9b00"/><rect x="337" y="329" width="1" height="1" fill="#e7e700"/><rect x="337" y="330" width="1" height="1" fill="#848400"/><rect x="338" y="329" width="1" height="1" fill="#e7e700"/><rect x="338" y="330" width="1" height="1" fill="#626200"/><rect x="339" y="329" width="1" height="1" fill="#e7e700"/><rect x="339" y="330" width="1" height="1" fill="#cdcd00"/><rect x="340" y="329" width="1" height="1" fill="#e7e700"/><rect x="340" y="330" width="1" height="1" fill="#b3b300"/><rect x="341" y="329" width="1" height="1" fill="#e7e700"/><rect x="341" y="330" width="1" height="1" fill="#585800"/><rect x="342" y="329" width="1" height="1" fill="#eaea00"/><rect x="342" y="330" width="1" height="1" fill="#8c8c00"/><rect x="343" y="329" width="1" height="1" fill="#eaea00"/><rect x="343" y="330" width="1" height="1" fill="#888800"/><rect x="344" y="329" width="1" height="1" fill="#eaea00"/><rect x="344" y="330" width="1" height="1" fill="#878700"/><rect x="345" y="329" width="1" height="1" fill="#eaea00"/><rect x="345" y="330" width="1" height="1" fill="#646400"/><rect x="346" y="329" width="1" height="1" fill="#eaea00"/><rect x="346" y="330" width="1" height="1" fill="#baba00"/><rect x="347" y="329" width="1" height="1" fill="#555500"/><rect x="347" y="330" width="1" height="1" fill="#4f4f00"/><rect x="348" y="329" width="1" height="1" fill="#e2e200"/><rect x="348" y="330" width="1" height="1" fill="#4f4f00"/><rect x="349" y="329" width="1" height="1" fill="#e2e200"/><rect x="349" y="330" width="1" height="1" fill="#b8b800"/><rect x="350" y="329" width="1" height="1" fill="#e2e200"/><rect x="350" y="330" width="1" height="1" fill="#595900"/><rect x="351" y="329" width="1" height="1" fill="#e2e200"/><rect x="351" y="330" width="1" height="1" fill="#a8a800"/><rect x="352" y="329" width="1" height="1" fill="#e2e200"/><rect x="352" y="330" width="1" height="1" fill="#8a8a00"/><rect x="353" y="329" width="1" height="1" fill="#e2e200"/><rect x="353" y="330" width="1" height="1" fill="#c6c600"/><rect x="354" y="329" width="1" height="1" fill="#313100"/><rect x="354" y="330" width="1" height="1" fill="#636300"/><rect x="355" y="329" width="1" height="1" fill="#ebeb00"/><rect x="355" y="330" width="1" height="1" fill="#5e5e00"/><rect x="356" y="329" width="1" height="1" fill="#ebeb00"/><rect x="356" y="330" width="1" height="1" fill="#6d6d00"/><rect x="357" y="329" width="1" height="1" fill="#ebeb00"/><rect x="357" y="330" width="1" height="1" fill="#969600"/><rect x="358" y="329" width="1" height="1" fill="#464600"/><rect x="358" y="330" width="1" height="1" fill="#828200"/><rect x="359" y="329" width="1" height="1" fill="#c6c600"/><rect x="359" y="330" width="1" height="1" fill="#787800"/><rect x="360" y="329" width="1" height="1" fill="#c6c600"/><rect x="360" y="330" width="1" height="1" fill="#6c6c00"/><rect x="361" y="329" width="1" height="1" fill="#c6c600"/><rect x="361" y="330" width="1" height="1" fill="#505000"/><rect x="362" y="329" width="1" height="1" fill="#c6c600"/><rect x="362" y="330" width="1" height="1" fill="#777700"/><rect x="363" y="329" width="1" height="1" fill="#c6c600"/><rect x="363" y="330" width="1" height="1" fill="#9f9f00"/><rect x="364" y="329" width="1" height="1" fill="#c6c600"/><rect x="364" y="330" width="1" height="1" fill="#464600"/><rect x="365" y="329" width="1" height="1" fill="#414100"/><rect x="365" y="330" width="1" height="1" fill="#999900"/><rect x="366" y="329" width="1" height="1" fill="#505000"/><rect x="366" y="330" width="1" height="1" fill="#494900"/><rect x="367" y="329" width="1" height="1" fill="#eaea00"/><rect x="367" y="330" width="1" height="1" fill="#656500"/><rect x="368" y="329" width="1" height="1" fill="#eaea00"/><rect x="368" y="330" width="1" height="1" fill="#caca00"/><rect x="369" y="329" width="1" height="1" fill="#eaea00"/><rect x="369" y="330" width="1" height="1" fill="#cccc00"/><rect x="370" y="329" width="1" height="1" fill="#bfbf00"/><rect x="370" y="330" width="1" height="1" fill="#6a6a00"/><rect x="371" y="329" width="1" height="1" fill="#bfbf00"/><rect x="371" y="330" width="1" height="1" fill="#636300"/><rect x="372" y="329" width="1" height="1" fill="#bfbf00"/><rect x="372" y="330" width="1" height="1" fill="#747400"/><rect x="373" y="329" width="1" height="1" fill="#bfbf00"/><rect x="373" y="330" width="1" height="1" fill="#717100"/><rect x="374" y="329" width="1" height="1" fill="#d9d900"/><rect x="374" y="330" width="1" height="1" fill="#5b5b00"/><rect x="375" y="329" width="1" height="1" fill="#d9d900"/><rect x="375" y="330" width="1" height="1" fill="#616100"/><rect x="376" y="329" width="1" height="1" fill="#d9d900"/><rect x="376" y="330" width="1" height="1" fill="#505000"/><rect x="377" y="329" width="1" height="1" fill="#c1c100"/><rect x="377" y="330" width="1" height="1" fill="#545400"/><rect x="378" y="329" width="1" height="1" fill="#c1c100"/><rect x="378" y="330" width="1" height="1" fill="#6f6f00"/><rect x="379" y="329" width="1" height="1" fill="#727200"/><rect x="379" y="330" width="1" height="1" fill="#5c5c00"/><rect x="380" y="329" width="1" height="1" fill="#3e3e00"/><rect x="380" y="330" width="1" height="1" fill="#5d5d00"/><rect x="381" y="329" width="1" height="1" fill="#d0d000"/><rect x="381" y="330" width="1" height="1" fill="#b3b300"/><rect x="382" y="329" width="1" height="1" fill="#d0d000"/><rect x="382" y="330" width="1" height="1" fill="#9c9c00"/><rect x="383" y="329" width="1" height="1" fill="#d0d000"/><rect x="383" y="330" width="1" height="1" fill="#6d6d00"/><rect x="384" y="329" width="1" height="1" fill="#d0d000"/><rect x="384" y="330" width="1" height="1" fill="#656500"/><rect x="385" y="329" width="1" height="1" fill="#d0d000"/><rect x="385" y="330" width="1" height="1" fill="#868600"/><rect x="386" y="329" width="1" height="1" fill="#484800"/><rect x="386" y="330" width="1" height="1" fill="#a5a500"/><rect x="387" y="329" width="1" height="1" fill="#d5d500"/><rect x="387" y="330" width="1" height="1" fill="#626200"/><rect x="388" y="329" width="1" height="1" fill="#d5d500"/><rect x="388" y="330" width="1" height="1" fill="#6d6d00"/><rect x="389" y="329" width="1" height="1" fill="#424200"/><rect x="389" y="330" width="1" height="1" fill="#959500"/><rect x="390" y="329" width="1" height="1" fill="#d4d400"/><rect x="390" y="330" width="1" height="1" fill="#737300"/><rect x="391" y="329" width="1" height="1" fill="#d4d400"/><rect x="391" y="330" width="1" height="1" fill="#5b5b00"/><rect x="392" y="329" width="1" height="1" fill="#d4d400"/><rect x="392" y="330" width="1" height="1" fill="#bebe00"/><rect x="393" y="329" width="1" height="1" fill="#d4d400"/><rect x="393" y="330" width="1" height="1" fill="#9e9e00"/><rect x="394" y="329" width="1" height="1" fill="#585800"/><rect x="394" y="330" width="1" height="1" fill="#4b4b00"/><rect x="395" y="329" width="1" height="1" fill="#e2e200"/><rect x="395" y="330" width="1" height="1" fill="#606000"/><rect x="396" y="329" width="1" height="1" fill="#e2e200"/><rect x="396" y="330" width="1" height="1" fill="#838300"/><rect x="397" y="329" width="1" height="1" fill="#e2e200"/><rect x="397" y="330" width="1" height="1" fill="#5a5a00"/><rect x="398" y="329" width="1" height="1" fill="#515100"/><rect x="398" y="330" width="1" height="1" fill="#595900"/><rect x="399" y="329" width="1" height="1" fill="#c2c200"/><rect x="399" y="330" width="1" height="1" fill="#808000"/><rect x="400" y="329" width="1" height="1" fill="#c2c200"/><rect x="400" y="330" width="1" height="1" fill="#4a4a00"/><rect x="401" y="329" width="1" height="1" fill="#c2c200"/><rect x="401" y="330" width="1" height="1" fill="#565600"/><rect x="402" y="329" width="1" height="1" fill="#5b5b00"/><rect x="402" y="330" width="1" height="1" fill="#595900"/><rect x="403" y="329" width="1" height="1" fill="#c5c500"/><rect x="403" y="330" width="1" height="1" fill="#a6a600"/><rect x="404" y="329" width="1" height="1" fill="#c5c500"/><rect x="404" y="330" width="1" height="1" fill="#838300"/><rect x="405" y="329" width="1" height="1" fill="#5b5b00"/><rect x="405" y="330" width="1" height="1" fill="#bcbc00"/><rect x="406" y="329" width="1" height="1" fill="#b5b500"/><rect x="406" y="330" width="1" height="1" fill="#515100"/><rect x="407" y="329" width="1" height="1" fill="#b5b500"/><rect x="407" y="330" width="1" height="1" fill="#9d9d00"/><rect x="408" y="329" width="1" height="1" fill="#b5b500"/><rect x="408" y="330" width="1" height="1" fill="#5e5e00"/><rect x="409" y="329" width="1" height="1" fill="#b5b500"/><rect x="409" y="330" width="1" height="1" fill="#898900"/><rect x="410" y="329" width="1" height="1" fill="#b5b500"/><rect x="410" y="330" width="1" height="1" fill="#7a7a00"/><rect x="411" y="329" width="1" height="1" fill="#bfbf00"/><rect x="411" y="330" width="1" height="1" fill="#747400"/><rect x="412" y="329" width="1" height="1" fill="#bfbf00"/><rect x="412" y="330" width="1" height="1" fill="#6b6b00"/><rect x="413" y="329" width="1" height="1" fill="#bfbf00"/><rect x="413" y="330" width="1" height="1" fill="#555500"/><rect x="414" y="329" width="1" height="1" fill="#414100"/><rect x="414" y="330" width="1" height="1" fill="#cece00"/><rect x="415" y="329" width="1" height="1" fill="#dada00"/><rect x="415" y="330" width="1" height="1" fill="#515100"/><rect x="416" y="329" width="1" height="1" fill="#dada00"/><rect x="416" y="330" width="1" height="1" fill="#5d5d00"/><rect x="417" y="329" width="1" height="1" fill="#c8c800"/><rect x="417" y="330" width="1" height="1" fill="#a9a900"/><rect x="418" y="329" width="1" height="1" fill="#c8c800"/><rect x="418" y="330" width="1" height="1" fill="#848400"/><rect x="419" y="329" width="1" height="1" fill="#c8c800"/><rect x="419" y="330" width="1" height="1" fill="#656500"/><rect x="420" y="329" width="1" height="1" fill="#c8c800"/><rect x="420" y="330" width="1" height="1" fill="#797900"/><rect x="421" y="329" width="1" height="1" fill="#c8c800"/><rect x="421" y="330" width="1" height="1" fill="#929200"/><rect x="422" y="329" width="1" height="1" fill="#baba00"/><rect x="422" y="330" width="1" height="1" fill="#a1a100"/><rect x="423" y="329" width="1" height="1" fill="#baba00"/><rect x="423" y="330" width="1" height="1" fill="#767600"/><rect x="424" y="329" width="1" height="1" fill="#baba00"/><rect x="424" y="330" width="1" height="1" fill="#434300"/><rect x="425" y="329" width="1" height="1" fill="#baba00"/><rect x="425" y="330" width="1" height="1" fill="#5f5f00"/><rect x="426" y="329" width="1" height="1" fill="#baba00"/><rect x="426" y="330" width="1" height="1" fill="#6d6d00"/><rect x="427" y="329" width="1" height="1" fill="#baba00"/><rect x="427" y="330" width="1" height="1" fill="#626200"/><rect x="428" y="329" width="1" height="1" fill="#bbbb00"/><rect x="428" y="330" width="1" height="1" fill="#6f6f00"/><rect x="429" y="329" width="1" height="1" fill="#bbbb00"/><rect x="429" y="330" width="1" height="1" fill="#6a6a00"/><rect x="429" y="328" width="1" height="1" fill="#787800"/><rect x="430" y="329" width="1" height="1" fill="#bbbb00"/><rect x="430" y="330" width="1" height="1" fill="#898900"/><rect x="431" y="329" width="1" height="1" fill="#575700"/><rect x="431" y="330" width="1" height="1" fill="#a6a600"/><rect x="432" y="329" width="1" height="1" fill="#e8e800"/><rect x="432" y="330" width="1" height="1" fill="#d1d100"/><rect x="433" y="329" width="1" height="1" fill="#e8e800"/><rect x="433" y="330" width="1" height="1" fill="#c1c100"/><rect x="434" y="329" width="1" height="1" fill="#e8e800"/><rect x="434" y="330" width="1" height="1" fill="#979700"/><rect x="435" y="329" width="1" height="1" fill="#3f3f00"/><rect x="435" y="330" width="1" height="1" fill="#b3b300"/><rect x="436" y="329" width="1" height="1" fill="#bbbb00"/><rect x="436" y="330" width="1" height="1" fill="#484800"/><rect x="437" y="329" width="1" height="1" fill="#bbbb00"/><rect x="437" y="330" width="1" height="1" fill="#4e4e00"/><rect x="438" y="329" width="1" height="1" fill="#bbbb00"/><rect x="438" y="330" width="1" height="1" fill="#7c7c00"/><rect x="439" y="329" width="1" height="1" fill="#bbbb00"/><rect x="439" y="330" width="1" height="1" fill="#606000"/><rect x="440" y="329" width="1" height="1" fill="#bbbb00"/><rect x="440" y="330" width="1" height="1" fill="#444400"/><rect x="441" y="329" width="1" height="1" fill="#bbbb00"/><rect x="441" y="330" width="1" height="1" fill="#6e6e00"/><rect x="442" y="329" width="1" height="1" fill="#3a3a00"/><rect x="442" y="330" width="1" height="1" fill="#abab00"/><rect x="443" y="329" width="1" height="1" fill="#404000"/><rect x="443" y="330" width="1" height="1" fill="#747400"/><rect x="444" y="329" width="1" height="1" fill="#e9e900"/><rect x="444" y="330" width="1" height="1" fill="#797900"/><rect x="445" y="329" width="1" height="1" fill="#e9e900"/><rect x="445" y="330" width="1" height="1" fill="#caca00"/><rect x="446" y="329" width="1" height="1" fill="#e9e900"/><rect x="446" y="330" width="1" height="1" fill="#8e8e00"/><rect x="447" y="329" width="1" height="1" fill="#e9e900"/><rect x="447" y="330" width="1" height="1" fill="#777700"/><rect x="448" y="329" width="1" height="1" fill="#e9e900"/><rect x="448" y="330" width="1" height="1" fill="#c5c500"/><rect x="449" y="329" width="1" height="1" fill="#707000"/><rect x="449" y="330" width="1" height="1" fill="#4a4a00"/><rect x="450" y="329" width="1" height="1" fill="#c0c000"/><rect x="450" y="330" width="1" height="1" fill="#868600"/><rect x="451" y="329" width="1" height="1" fill="#c0c000"/><rect x="451" y="330" width="1" height="1" fill="#a0a000"/><rect x="451" y="328" width="1" height="1" fill="#787800"/><rect x="452" y="329" width="1" height="1" fill="#c0c000"/><rect x="452" y="330" width="1" height="1" fill="#4e4e00"/><rect x="453" y="329" width="1" height="1" fill="#c0c000"/><rect x="453" y="330" width="1" height="1" fill="#646400"/><rect x="454" y="329" width="1" height="1" fill="#c0c000"/><rect x="454" y="330" width="1" height="1" fill="#9f9f00"/><rect x="455" y="329" width="1" height="1" fill="#c0c000"/><rect x="455" y="330" width="1" height="1" fill="#515100"/><rect x="456" y="329" width="1" height="1" fill="#4d4d00"/><rect x="456" y="330" width="1" height="1" fill="#606000"/><rect x="457" y="329" width="1" height="1" fill="#6e6e00"/><rect x="457" y="330" width="1" height="1" fill="#595900"/><rect x="458" y="329" width="1" height="1" fill="#c4c400"/><rect x="458" y="330" width="1" height="1" fill="#929200"/><rect x="459" y="329" width="1" height="1" fill="#c4c400"/><rect x="459" y="330" width="1" height="1" fill="#646400"/><rect x="460" y="329" width="1" height="1" fill="#c4c400"/><rect x="460" y="330" width="1" height="1" fill="#9b9b00"/><rect x="461" y="329" width="1" height="1" fill="#d2d200"/><rect x="461" y="330" width="1" height="1" fill="#bbbb00"/><rect x="462" y="329" width="1" height="1" fill="#d2d200"/><rect x="462" y="330" width="1" height="1" fill="#5e5e00"/><rect x="463" y="329" width="1" height="1" fill="#d2d200"/><rect x="463" y="330" width="1" height="1" fill="#595900"/><rect x="464" y="329" width="1" height="1" fill="#d2d200"/><rect x="464" y="330" width="1" height="1" fill="#7f7f00"/><rect x="465" y="329" width="1" height="1" fill="#d2d200"/><rect x="465" y="330" width="1" height="1" fill="#b4b400"/><rect x="466" y="329" width="1" height="1" fill="#d2d200"/><rect x="466" y="330" width="1" height="1" fill="#b3b300"/><rect x="466" y="328" width="1" height="1" fill="#787800"/><rect x="467" y="329" width="1" height="1" fill="#565600"/><rect x="467" y="330" width="1" height="1" fill="#848400"/><rect x="468" y="329" width="1" height="1" fill="#b9b900"/><rect x="468" y="330" width="1" height="1" fill="#5d5d00"/><rect x="469" y="329" width="1" height="1" fill="#b9b900"/><rect x="469" y="330" width="1" height="1" fill="#595900"/><rect x="470" y="329" width="1" height="1" fill="#b9b900"/><rect x="470" y="330" width="1" height="1" fill="#787800"/><rect x="471" y="329" width="1" height="1" fill="#b9b900"/><rect x="471" y="330" width="1" height="1" fill="#9c9c00"/><rect x="472" y="329" width="1" height="1" fill="#b9b900"/><rect x="472" y="330" width="1" height="1" fill="#444400"/><rect x="473" y="329" width="1" height="1" fill="#b9b900"/><rect x="473" y="330" width="1" height="1" fill="#8d8d00"/><rect x="474" y="329" width="1" height="1" fill="#343400"/><rect x="474" y="330" width="1" height="1" fill="#515100"/><rect x="475" y="329" width="1" height="1" fill="#676700"/><rect x="475" y="330" width="1" height="1" fill="#caca00"/><rect x="476" y="329" width="1" height="1" fill="#dbdb00"/><rect x="476" y="330" width="1" height="1" fill="#abab00"/><rect x="477" y="329" width="1" height="1" fill="#dbdb00"/><rect x="477" y="330" width="1" height="1" fill="#898900"/><rect x="478" y="329" width="1" height="1" fill="#dbdb00"/><rect x="478" y="330" width="1" height="1" fill="#9f9f00"/><rect x="479" y="329" width="1" height="1" fill="#dbdb00"/><rect x="479" y="330" width="1" height="1" fill="#bfbf00"/><rect x="480" y="329" width="1" height="1" fill="#383800"/><rect x="480" y="330" width="1" height="1" fill="#868600"/><rect x="481" y="329" width="1" height="1" fill="#d4d400"/><rect x="481" y="330" width="1" height="1" fill="#686800"/><rect x="482" y="329" width="1" height="1" fill="#d4d400"/><rect x="482" y="330" width="1" height="1" fill="#9e9e00"/><rect x="483" y="329" width="1" height="1" fill="#d4d400"/><rect x="483" y="330" width="1" height="1" fill="#8a8a00"/><rect x="484" y="329" width="1" height="1" fill="#d4d400"/><rect x="484" y="330" width="1" height="1" fill="#919100"/><rect x="485" y="329" width="1" height="1" fill="#d4d400"/><rect x="485" y="330" width="1" height="1" fill="#626200"/><rect x="486" y="329" width="1" height="1" fill="#cece00"/><rect x="486" y="330" width="1" height="1" fill="#acac00"/><rect x="487" y="329" width="1" height="1" fill="#cece00"/><rect x="487" y="330" width="1" height="1" fill="#8d8d00"/><rect x="488" y="329" width="1" height="1" fill="#cece00"/><rect x="488" y="330" width="1" height="1" fill="#a4a400"/><rect x="489" y="329" width="1" height="1" fill="#cece00"/><rect x="489" y="330" width="1" height="1" fill="#9a9a00"/><rect x="490" y="329" width="1" height="1" fill="#cece00"/><rect x="490" y="330" width="1" height="1" fill="#4b4b00"/><rect x="491" y="329" width="1" height="1" fill="#cece00"/><rect x="491" y="330" width="1" height="1" fill="#5c5c00"/><rect x="492" y="329" width="1" height="1" fill="#5c5c00"/><rect x="492" y="330" width="1" height="1" fill="#4f4f00"/><rect x="493" y="329" width="1" height="1" fill="#b6b600"/><rect x="493" y="330" width="1" height="1" fill="#5f5f00"/><rect x="494" y="329" width="1" height="1" fill="#b6b600"/><rect x="494" y="330" width="1" height="1" fill="#747400"/><rect x="495" y="329" width="1" height="1" fill="#b6b600"/><rect x="495" y="330" width="1" height="1" fill="#7a7a00"/><rect x="496" y="329" width="1" height="1" fill="#b6b600"/><rect x="496" y="330" width="1" height="1" fill="#929200"/><rect x="497" y="329" width="1" height="1" fill="#b6b600"/><rect x="497" y="330" width="1" height="1" fill="#595900"/><rect x="498" y="329" width="1" height="1" fill="#343400"/><rect x="498" y="330" width="1" height="1" fill="#838300"/><rect x="499" y="329" width="1" height="1" fill="#4a4a00"/><rect x="499" y="330" width="1" height="1" fill="#676700"/><rect x="500" y="329" width="1" height="1" fill="#bbbb00"/><rect x="500" y="330" width="1" height="1" fill="#8f8f00"/><rect x="501" y="329" width="1" height="1" fill="#bbbb00"/><rect x="501" y="330" width="1" height="1" fill="#4f4f00"/><rect x="502" y="329" width="1" height="1" fill="#c2c200"/><rect x="502" y="330" width="1" height="1" fill="#a3a300"/><rect x="503" y="329" width="1" height="1" fill="#c2c200"/><rect x="503" y="330" width="1" height="1" fill="#6e6e00"/><rect x="504" y="329" width="1" height="1" fill="#737300"/><rect x="504" y="330" width="1" height="1" fill="#d3d300"/><rect x="505" y="329" width="1" height="1" fill="#606000"/><rect x="505" y="330" width="1" height="1" fill="#afaf00"/><rect x="506" y="329" width="1" height="1" fill="#c1c100"/><rect x="506" y="330" width="1" height="1" fill="#5e5e00"/><rect x="507" y="329" width="1" height="1" fill="#c1c100"/><rect x="507" y="330" width="1" height="1" fill="#5d5d00"/><rect x="508" y="329" width="1" height="1" fill="#c1c100"/><rect x="508" y="330" width="1" height="1" fill="#a7a700"/><rect x="509" y="329" width="1" height="1" fill="#c1c100"/><rect x="509" y="330" width="1" height="1" fill="#676700"/><rect x="510" y="329" width="1" height="1" fill="#c1c100"/><rect x="510" y="330" width="1" height="1" fill="#848400"/><rect x="510" y="328" width="1" height="1" fill="#787800"/><rect x="511" y="329" width="1" height="1" fill="#c1c100"/><rect x="511" y="330" width="1" height="1" fill="#6e6e00"/><rect x="512" y="329" width="1" height="1" fill="#d6d600"/><rect x="512" y="330" width="1" height="1" fill="#b6b600"/><rect x="513" y="329" width="1" height="1" fill="#d6d600"/><rect x="513" y="330" width="1" height="1" fill="#b7b700"/><rect x="514" y="329" width="1" height="1" fill="#d6d600"/><rect x="514" y="330" width="1" height="1" fill="#b0b000"/><rect x="515" y="329" width="1" height="1" fill="#d6d600"/><rect x="515" y="330" width="1" height="1" fill="#646400"/><rect x="516" y="329" width="1" height="1" fill="#cdcd00"/><rect x="516" y="330" width="1" height="1" fill="#636300"/><rect x="517" y="329" width="1" height="1" fill="#cdcd00"/><rect x="517" y="330" width="1" height="1" fill="#a2a200"/><rect x="518" y="329" width="1" height="1" fill="#cdcd00"/><rect x="518" y="330" width="1" height="1" fill="#747400"/><rect x="519" y="329" width="1" height="1" fill="#525200"/><rect x="519" y="330" width="1" height="1" fill="#8e8e00"/><rect x="520" y="329" width="1" height="1" fill="#e7e700"/><rect x="520" y="330" width="1" height="1" fill="#6b6b00"/><rect x="521" y="329" width="1" height="1" fill="#e7e700"/><rect x="521" y="330" width="1" height="1" fill="#5a5a00"/><rect x="522" y="329" width="1" height="1" fill="#e7e700"/><rect x="522" y="330" width="1" height="1" fill="#7f7f00"/><rect x="523" y="329" width="1" height="1" fill="#bebe00"/><rect x="523" y="330" width="1" height="1" fill="#5e5e00"/><rect x="524" y="329" width="1" height="1" fill="#bebe00"/><rect x="524" y="330" width="1" height="1" fill="#a3a300"/><rect x="525" y="329" width="1" height="1" fill="#bebe00"/><rect x="525" y="330" width="1" height="1" fill="#5f5f00"/><rect x="526" y="329" width="1" height="1" fill="#bebe00"/><rect x="526" y="330" width="1" height="1" fill="#525200"/><rect x="527" y="329" width="1" height="1" fill="#bebe00"/><rect x="527" y="330" width="1" height="1" fill="#686800"/><rect x="528" y="329" width="1" height="1" fill="#bebe00"/><rect x="528" y="330" width="1" height="1" fill="#8e8e00"/><rect x="529" y="329" width="1" height="1" fill="#e6e600"/><rect x="529" y="330" width="1" height="1" fill="#898900"/><rect x="530" y="329" width="1" height="1" fill="#e6e600"/><rect x="530" y="330" width="1" height="1" fill="#808000"/><rect x="531" y="329" width="1" height="1" fill="#e6e600"/><rect x="531" y="330" width="1" height="1" fill="#bfbf00"/><rect x="532" y="329" width="1" height="1" fill="#e6e600"/><rect x="532" y="330" width="1" height="1" fill="#767600"/><rect x="533" y="329" width="1" height="1" fill="#323200"/><rect x="533" y="330" width="1" height="1" fill="#5d5d00"/><rect x="534" y="329" width="1" height="1" fill="#5a5a00"/><rect x="534" y="330" width="1" height="1" fill="#4c4c00"/><rect x="535" y="329" width="1" height="1" fill="#cccc00"/><rect x="535" y="330" width="1" height="1" fill="#7d7d00"/><rect x="536" y="329" width="1" height="1" fill="#cccc00"/><rect x="536" y="330" width="1" height="1" fill="#818100"/><rect x="537" y="329" width="1" height="1" fill="#cccc00"/><rect x="537" y="330" width="1" height="1" fill="#6a6a00"/><rect x="538" y="329" width="1" height="1" fill="#cccc00"/><rect x="538" y="330" width="1" height="1" fill="#727200"/><rect x="539" y="329" width="1" height="1" fill="#565600"/><rect x="539" y="330" width="1" height="1" fill="#888800"/><rect x="540" y="329" width="1" height="1" fill="#cbcb00"/><rect x="540" y="330" width="1" height="1" fill="#a7a700"/><rect x="541" y="329" width="1" height="1" fill="#cbcb00"/><rect x="541" y="330" width="1" height="1" fill="#676700"/><rect x="542" y="329" width="1" height="1" fill="#cbcb00"/><rect x="542" y="330" width="1" height="1" fill="#5f5f00"/><rect x="542" y="328" width="1" height="1" fill="#787800"/><rect x="543" y="329" width="1" height="1" fill="#d5d500"/><rect x="543" y="330" width="1" height="1" fill="#aaaa00"/><rect x="544" y="329" width="1" height="1" fill="#d5d500"/><rect x="544" y="330" width="1" height="1" fill="#6d6d00"/><rect x="545" y="329" width="1" height="1" fill="#d5d500"/><rect x="545" y="330" width="1" height="1" fill="#b7b700"/><rect x="546" y="329" width="1" height="1" fill="#d5d500"/><rect x="546" y="330" width="1" height="1" fill="#9b9b00"/><rect x="547" y="329" width="1" height="1" fill="#d5d500"/><rect x="547" y="330" width="1" height="1" fill="#bbbb00"/><rect x="548" y="329" width="1" height="1" fill="#686800"/><rect x="548" y="330" width="1" height="1" fill="#6d6d00"/><rect x="549" y="329" width="1" height="1" fill="#bbbb00"/><rect x="549" y="330" width="1" height="1" fill="#747400"/><rect x="550" y="329" width="1" height="1" fill="#bbbb00"/><rect x="550" y="330" width="1" height="1" fill="#a1a100"/><rect x="551" y="329" width="1" height="1" fill="#bbbb00"/><rect x="551" y="330" width="1" height="1" fill="#898900"/><rect x="552" y="329" width="1" height="1" fill="#bbbb00"/><rect x="552" y="330" width="1" height="1" fill="#a0a000"/><rect x="553" y="329" width="1" height="1" fill="#bbbb00"/><rect x="553" y="330" width="1" height="1" fill="#909000"/><rect x="554" y="329" width="1" height="1" fill="#555500"/><rect x="554" y="330" width="1" height="1" fill="#b2b200"/><rect x="555" y="329" width="1" height="1" fill="#e4e400"/><rect x="555" y="330" width="1" height="1" fill="#8b8b00"/><rect x="556" y="329" width="1" height="1" fill="#e4e400"/><rect x="556" y="330" width="1" height="1" fill="#baba00"/><rect x="557" y="329" width="1" height="1" fill="#e4e400"/><rect x="557" y="330" width="1" height="1" fill="#c2c200"/><rect x="558" y="329" width="1" height="1" fill="#e4e400"/><rect x="558" y="330" width="1" height="1" fill="#5e5e00"/><rect x="559" y="329" width="1" height="1" fill="#e4e400"/><rect x="559" y="330" width="1" height="1" fill="#c2c200"/><rect x="560" y="329" width="1" height="1" fill="#535300"/><rect x="560" y="330" width="1" height="1" fill="#9c9c00"/><rect x="561" y="329" width="1" height="1" fill="#515100"/><rect x="561" y="330" width="1" height="1" fill="#767600"/><rect x="562" y="329" width="1" height="1" fill="#b8b800"/><rect x="562" y="330" width="1" height="1" fill="#444400"/><rect x="563" y="329" width="1" height="1" fill="#b8b800"/><rect x="563" y="330" width="1" height="1" fill="#666600"/><rect x="564" y="329" width="1" height="1" fill="#b8b800"/><rect x="564" y="330" width="1" height="1" fill="#939300"/><rect x="565" y="329" width="1" height="1" fill="#b8b800"/><rect x="565" y="330" width="1" height="1" fill="#818100"/><rect x="566" y="329" width="1" height="1" fill="#747400"/><rect x="566" y="330" width="1" height="1" fill="#7c7c00"/><rect x="567" y="329" width="1" height="1" fill="#dede00"/><rect x="567" y="330" width="1" height="1" fill="#686800"/><rect x="568" y="329" width="1" height="1" fill="#dede00"/><rect x="568" y="330" width="1" height="1" fill="#535300"/><rect x="569" y="329" width="1" height="1" fill="#dede00"/><rect x="569" y="330" width="1" height="1" fill="#989800"/><rect x="570" y="329" width="1" height="1" fill="#dede00"/><rect x="570" y="330" width="1" height="1" fill="#565600"/><rect x="571" y="329" width="1" height="1" fill="#dede00"/><rect x="571" y="330" width="1" height="1" fill="#848400"/><rect x="572" y="329" width="1" height="1" fill="#dede00"/><rect x="572" y="330" width="1" height="1" fill="#7c7c00"/><rect x="573" y="329" width="1" height="1" fill="#464600"/><rect x="573" y="330" width="1" height="1" fill="#7b7b00"/><rect x="574" y="329" width="1" height="1" fill="#bcbc00"/><rect x="574" y="330" width="1" height="1" fill="#565600"/><rect x="575" y="329" width="1" height="1" fill="#bcbc00"/><rect x="575" y="330" width="1" height="1" fill="#888800"/><rect x="576" y="329" width="1" height="1" fill="#eeee00"/><rect x="576" y="330" width="1" height="1" fill="#545400"/><rect x="577" y="329" width="1" height="1" fill="#eeee00"/><rect x="577" y="330" width="1" height="1" fill="#c3c300"/><rect x="578" y="329" width="1" height="1" fill="#eeee00"/><rect x="578" y="330" width="1" height="1" fill="#5d5d00"/><rect x="579" y="329" width="1" height="1" fill="#eeee00"/><rect x="579" y="330" width="1" height="1" fill="#c7c700"/><rect x="580" y="329" width="1" height="1" fill="#eeee00"/><rect x="580" y="330" width="1" height="1" fill="#bcbc00"/><rect x="581" y="329" width="1" height="1" fill="#eeee00"/><rect x="581" y="330" width="1" height="1" fill="#616100"/><rect x="581" y="328" width="1" height="1" fill="#787800"/><rect x="582" y="329" width="1" height="1" fill="#626200"/><rect x="582" y="330" width="1" height="1" fill="#aaaa00"/><rect x="583" y="329" width="1" height="1" fill="#e5e500"/><rect x="583" y="330" width="1" height="1" fill="#646400"/><rect x="584" y="329" width="1" height="1" fill="#e5e500"/><rect x="584" y="330" width="1" height="1" fill="#8e8e00"/><rect x="585" y="329" width="1" height="1" fill="#e5e500"/><rect x="585" y="330" width="1" height="1" fill="#7e7e00"/><rect x="586" y="329" width="1" height="1" fill="#414100"/><rect x="586" y="330" width="1" height="1" fill="#6b6b00"/><rect x="587" y="329" width="1" height="1" fill="#474700"/><rect x="587" y="330" width="1" height="1" fill="#616100"/><rect x="588" y="329" width="1" height="1" fill="#e0e000"/><rect x="588" y="330" width="1" height="1" fill="#baba00"/><rect x="589" y="329" width="1" height="1" fill="#e0e000"/><rect x="589" y="330" width="1" height="1" fill="#b3b300"/><rect x="590" y="329" width="1" height="1" fill="#e0e000"/><rect x="590" y="330" width="1" height="1" fill="#747400"/><rect x="591" y="329" width="1" height="1" fill="#e0e000"/><rect x="591" y="330" width="1" height="1" fill="#8d8d00"/><rect x="592" y="329" width="1" height="1" fill="#e0e000"/><rect x="592" y="330" width="1" height="1" fill="#535300"/><rect x="593" y="329" width="1" height="1" fill="#e0e000"/><rect x="593" y="330" width="1" height="1" fill="#818100"/><rect x="594" y="329" width="1" height="1" fill="#424200"/><rect x="594" y="330" width="1" height="1" fill="#919100"/><rect x="595" y="329" width="1" height="1" fill="#c3c300"/><rect x="595" y="330" width="1" height="1" fill="#888800"/><rect x="104" y="257" width="1" height="73" fill="#f0f000"/><rect x="105" y="257" width="1" height="73" fill="#5a5a00"/><rect x="315" y="298" width="1" height="32" fill="#f0f000"/><rect x="316" y="298" width="1" height="32" fill="#5a5a00"/><rect x="557" y="256" width="1" height="74" fill="#f0f000"/><rect x="558" y="256" width="1" height="74" fill="#5a5a00"/></svg>
<div class="a" style="left:319px;top:279px;width:13px;height:17px;background:#000"></div>
<svg class="a" style="left:310px;top:282px" width="12" height="18"><polygon points="5.3,1 9.5,8.8 5.3,17 1.1,8.8" fill="#00ff00"/></svg>
<svg class="a" style="left:318px;top:276px" width="12" height="18"><path d="M7.4,4 L7.4,15" stroke="#f0f000" stroke-width="1.3" fill="none"/><path d="M7.8,4.3 Q6.5,6.2 3.8,6.5" stroke="#f0f000" stroke-width="1.5" fill="none"/></svg>

<div class="t" style="left:2.6px;top:407px;font-size:10.7px;font-weight:bold;color:#fff">Center 999.9833 MHz</div>
<div class="t" style="left:2.6px;top:420.5px;font-size:10.7px;font-weight:bold;color:#fff">#Res BW  (-6dB) 10 Hz</div>
<div class="t" style="left:258.7px;top:407px;font-size:10.7px;font-weight:bold;color:#fff">Video BW 68 Hz</div>
<div class="t" style="right:185px;top:407px;font-size:10.7px;font-weight:bold;color:#fff">Span 500.0 kHz</div>
<div class="t" style="right:185px;top:420.5px;font-size:10.7px;font-weight:bold;color:#fff">Sweep (FFT) ~953 ms  (1001 pts)</div>


<div class="a" style="left:0;top:435px;width:598px;height:33px;background:#1b1b1b"></div>
<div class="tb" style="left:3px;width:27.5px"></div>
<svg class="a" style="left:0;top:435px" width="40" height="33">
 <polygon points="8,9.5 15.6,8.4 15.6,15.6 8,15.6" fill="#eee"/>
 <polygon points="16.8,8.2 26.3,6 26.3,15.6 16.8,15.6" fill="#eee"/>
 <polygon points="8,16.8 15.6,16.8 15.6,23.6 8,22.6" fill="#eee"/>
 <polygon points="16.8,16.8 26.3,16.8 26.3,26.2 16.8,24" fill="#eee"/>
</svg>
<div class="tb" style="left:36px;width:27.5px"></div>
<svg class="a" style="left:36px;top:435px" width="30" height="33">
 <path d="M10.2,15 A7,7 0 1 1 20.5,23.7" fill="none" stroke="#fff" stroke-width="3"/>
 <polygon points="4.5,7.7 4,17 12.8,17" fill="#fff"/>
</svg>
<div class="tb" style="left:70px;width:27.5px"></div>
<svg class="a" style="left:70px;top:435px" width="30" height="33">
 <g transform="translate(27.5,0) scale(-1,1)">
 <path d="M10.2,15 A7,7 0 1 1 20.5,23.7" fill="none" stroke="#999" stroke-width="3"/>
 <polygon points="4.5,7.7 4,17 12.8,17" fill="#999"/>
 </g>
</svg>
<div class="tb" style="left:103px;width:27.5px"></div>
<svg class="a" style="left:103px;top:435px" width="30" height="33">
 <path d="M3.6,11 L12,11 L14,7.6 L23.4,7.6 L24.4,9 L24.4,25 L3.6,25 Z" fill="#fff"/>
</svg>
<div class="tb" style="left:137px;width:27.5px"></div>
<div class="t" style="left:143.5px;top:438.5px;font-size:25px;font-weight:bold;color:#fff">?</div>
<div class="t" style="left:171px;top:439.5px;font-size:10.75px;color:#eee;line-height:12.5px;text-align:center">Aug 04, 2021<br>4:15:05 PM</div>
<div class="a" style="left:237px;top:437px;width:221px;height:28px;background:#1b1b1b;border:1px solid #4d4d4d;border-radius:3px"></div>
<svg class="a" style="left:237px;top:435px" width="60" height="33">
 <ellipse cx="15" cy="15.5" rx="10.5" ry="8" fill="#555" stroke="#aaa" stroke-width="0.8"/>
 <path d="M9,21 L6,26 L13,23" fill="#555" stroke="#aaa" stroke-width="0.8"/>
 <circle cx="11.8" cy="16" r="1" fill="#ddd"/><circle cx="15" cy="16" r="1" fill="#ddd"/><circle cx="18.2" cy="16" r="1" fill="#ddd"/>
 <polygon points="39.5,6.5 50,26.5 29,26.5" fill="none" stroke="#3c3c3c" stroke-width="0.8"/>
</svg>
<div class="tb" style="left:464px;width:27px;background:#000"></div>
<svg class="a" style="left:464px;top:435px" width="28" height="33" shape-rendering="crispEdges">
 <rect x="13" y="11" width="1" height="11" fill="#ddd"/>
 <rect x="5" y="21" width="20" height="1" fill="#ddd"/>
 <rect x="14" y="10.5" width="7" height="1" fill="#888"/>
 <rect x="11" y="8.8" width="5" height="5" fill="#eee"/>
 <rect x="19" y="8.8" width="5" height="5" fill="#eee"/>
 <rect x="2.6" y="19.2" width="5" height="5" fill="#eee"/>
 <rect x="11" y="19.2" width="5" height="5" fill="#eee"/>
 <rect x="19" y="19.2" width="5" height="5" fill="#eee"/>
</svg>
<div class="tb" style="left:497px;width:28px;background:#000"></div>
<svg class="a" style="left:497px;top:435px" width="28" height="33">
 <g fill="none" stroke="#999" stroke-width="1">
 <rect x="3.5" y="5.5" width="9" height="10" /><rect x="15.5" y="5.5" width="9" height="10" />
 <rect x="3.5" y="17.5" width="9" height="10" /><rect x="15.5" y="17.5" width="9" height="10" />
 </g>
 <g transform="translate(-2,0.5)">
 <path d="M6.5,7.5 L11.5,13.5" stroke="#000" stroke-width="3.6" stroke-linecap="round"/>
 <path d="M8.5,14 L12,12.5 L14.5,13 L15.5,10.5 L17.5,11 L19,15 L20.5,19.5 L17.5,22.5 L13,22 L9.5,18.5 Z" fill="#eee" stroke="#000" stroke-width="0.7"/>
 <path d="M7,7.5 L11.8,14" stroke="#eee" stroke-width="2.5" stroke-linecap="round"/>
 <path d="M13,23.5 L19.2,18 L21.2,20.4 L15,25.9 Z" fill="#eee" stroke="#000" stroke-width="0.7"/>
 </g>
</svg>
<div class="tb" style="left:531px;width:27px;background:#000"></div>
<svg class="a" style="left:531px;top:435px" width="28" height="33">
 <g fill="none" stroke="#999" stroke-width="1">
 <rect x="3.5" y="5.5" width="9" height="10" rx="0.8"/><rect x="14.5" y="5.5" width="9" height="10" rx="0.8"/>
 <rect x="3.5" y="17.5" width="9" height="9" rx="0.8"/><rect x="14.5" y="17.5" width="9" height="9" rx="0.8"/>
 </g>
</svg>
<div class="tb" style="left:564px;width:27.5px;background:#000"></div>
<svg class="a" style="left:564px;top:435px" width="28" height="33">
 <g stroke="#eee" stroke-width="1.1">
 <line x1="12" y1="15" x2="7" y2="10"/><line x1="15.5" y1="15" x2="20.5" y2="10"/>
 <line x1="12" y1="18.5" x2="7" y2="23.5"/><line x1="15.5" y1="18.5" x2="20.5" y2="23.5"/>
 </g>
 <g fill="#eee">
 <polygon points="3.5,6.5 10,8.2 5.2,13"/><polygon points="24,6.5 17.5,8.2 22.3,13"/>
 <polygon points="3.5,27 10,25.3 5.2,20.5"/><polygon points="24,27 17.5,25.3 22.3,20.5"/>
 </g>
</svg>


<div class="a" style="left:598px;top:34px;width:182px;height:434px;background:#124a66"></div>
<div class="a" style="left:595px;top:34px;width:2.5px;height:51px;background:#555"></div>
<div class="a" style="left:600px;top:36px;width:177px;height:37px;background:#4d4d4d;border:1px solid #8a8a8a"></div>
<div class="a" style="left:603px;top:64px;width:173px;height:5px;border-left:1px solid #888;border-right:1px solid #888;border-bottom:1px solid #888"></div>
<div class="t" style="left:602.3px;top:39.2px;font-size:10.75px;color:#f2f2f2">Select Trace</div>
<div class="t" style="left:604.5px;top:54.6px;font-size:10.6px;color:#f2f2f2">Trace 2</div>
<svg class="a" style="left:768.8px;top:58px" width="5.5" height="7"><polygon points="0.2,0.2 4.3,0.2 2.25,6" fill="#fff"/></svg>

<div class="a" style="left:600px;top:75.5px;width:117px;height:389.5px;background:#3da8d9;border-radius:4px 4px 0 0"></div>
<div class="a" style="left:716px;top:78px;width:61.5px;height:27px;background:#3da8d9;border-radius:0 5px 5px 0"></div>
<div class="t" style="left:720px;top:80.5px;font-size:10.5px;color:#0a0a0a;line-height:11.5px">Trace<br>Control</div>

<div class="a" style="left:603.5px;top:79px;width:109.5px;height:137.5px;background:#4d4d4d"></div>

<div class="t" style="left:605px;top:81px;font-size:10.5px;color:#f2f2f2">Trace Type</div>
<div class="rb" style="left:605.2px;top:101.0px"></div>
<div class="rl" style="left:621.6px;top:103.0px">Clear / Write</div>
<div class="rb" style="left:605.2px;top:131.0px"></div>
<div class="rl" style="left:621.6px;top:133.0px">Trace Average</div>
<div class="rb" style="left:605.2px;top:161.0px"></div>
<div class="rl" style="left:621.6px;top:163.0px">Max Hold</div>
<div class="rb" style="left:605.2px;top:191.0px"></div>
<div class="rl" style="left:621.6px;top:193.0px">Min Hold</div>
<div class="a" style="left:610px;top:166px;width:6px;height:6px;border-radius:50%;background:#3da8d9"></div>

<div class="a" style="left:607px;top:221px;width:103px;height:26.5px;background:#4d4d4d;border-radius:5px"></div>
<div class="t" style="left:617.5px;top:229px;font-size:10.5px;color:#f2f2f2">Restart Max Hold</div>
<div class="a" style="left:603.5px;top:251.5px;width:109.5px;height:138px;background:#4d4d4d"></div>
<div class="t" style="left:604.5px;top:254px;font-size:10.5px;color:#f2f2f2">View/Blank</div>

<div class="rb" style="left:605.2px;top:273.7px"></div>
<div class="rl" style="left:621.6px;top:275.7px">Active</div>
<div class="rb" style="left:605.2px;top:303.59999999999997px"></div>
<div class="rl" style="left:621.6px;top:305.59999999999997px">View</div>
<div class="rb" style="left:605.2px;top:333.5px"></div>
<div class="rl" style="left:621.6px;top:335.5px">Blank</div>
<div class="rb" style="left:605.2px;top:363.4px"></div>
<div class="rl" style="left:621.6px;top:365.4px">Background</div>
<div class="a" style="left:610px;top:338.3px;width:6px;height:6px;border-radius:50%;background:#3da8d9"></div>

<div class="a" style="left:607.5px;top:393.5px;width:102.5px;height:26.5px;background:#4d4d4d;border-radius:5px"></div>
<div class="t" style="left:625px;top:394.5px;font-size:10.5px;color:#f2f2f2;line-height:12.8px;text-align:center">Trace Settings<br>Table</div>
<svg class="a" style="left:607px;top:396px" width="12" height="22"><polyline points="9,2.5 3,10.5 9,19.5" fill="none" stroke="#fff" stroke-width="1.2"/></svg>

<div class="sk" style="top:111.5px"></div>
<div class="skt" style="top:119.5px">Detector</div>
<div class="sk" style="top:145.0px"></div>
<div class="skt" style="top:153.0px">Math</div>
<div class="sk" style="top:178.5px"></div>
<div class="skt" style="top:180.5px">Trace<br>Function</div>
<div class="sk" style="top:212.0px"></div>
<div class="skt" style="top:220.0px">Normalize</div>
</body></html>
